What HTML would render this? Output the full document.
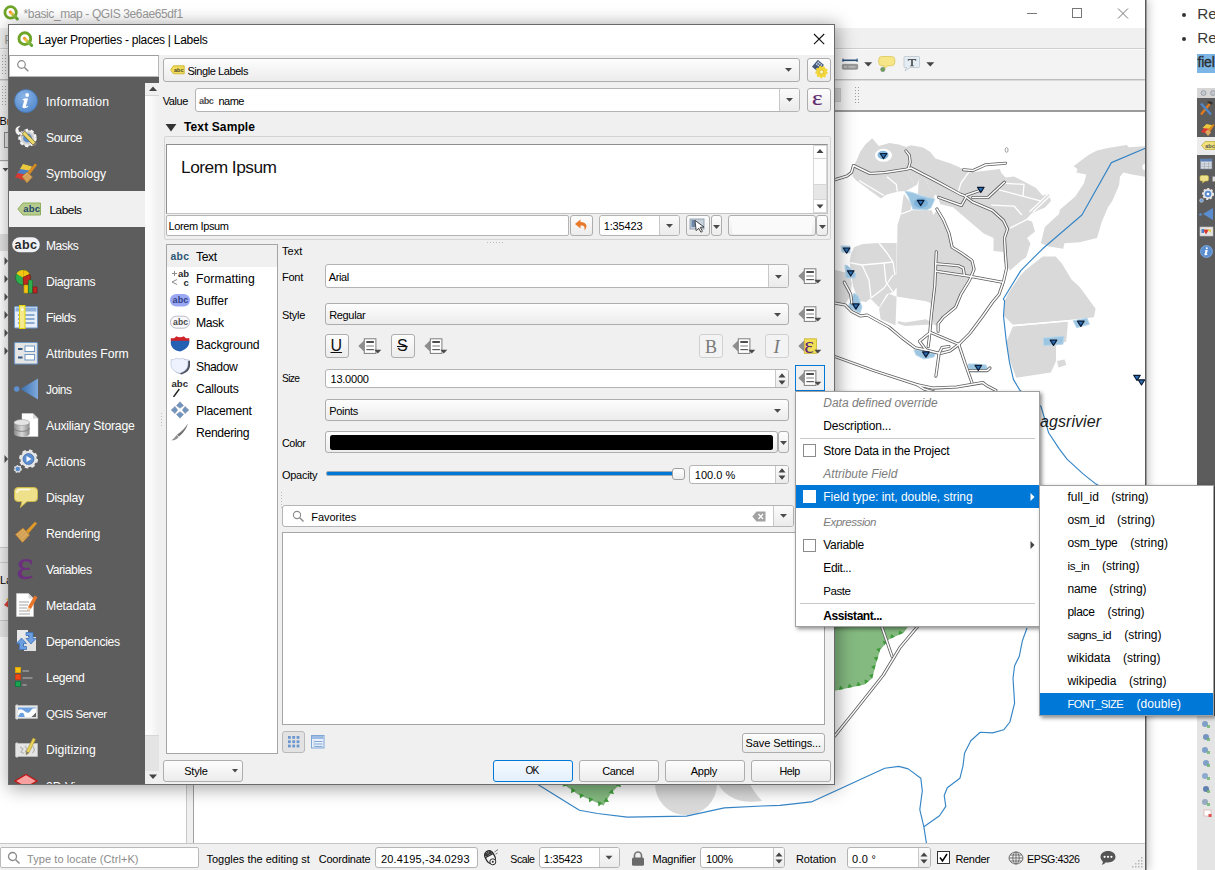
<!DOCTYPE html>
<html><head><meta charset="utf-8"><title>QGIS</title>
<style>
html,body{margin:0;padding:0}
body{width:1215px;height:870px;overflow:hidden;background:#fff;position:relative;font-family:"Liberation Sans",sans-serif;font-size:11px}
div,span.t,svg{position:absolute;box-sizing:border-box}
span.t{white-space:pre}
.btn{border:1px solid #adadad;border-radius:3px;background:linear-gradient(#fdfdfd,#ececec)}
.inp{border:1px solid #b4b4b4;border-radius:3px;background:#fff}
</style></head><body>
<div style="left:1146px;top:0px;width:69px;height:870px;background:#fff"></div>
<div style="left:1181.6px;top:12.7px;width:4.6px;height:4.6px;background:#333;border-radius:50%"></div>
<div style="left:1181.6px;top:36.5px;width:4.6px;height:4.6px;background:#333;border-radius:50%"></div>
<span class="t" style="left:1197.3px;top:3.8px;font-size:15.3px;line-height:20px;color:#3a3a3a;">Re</span>
<span class="t" style="left:1197.3px;top:27.6px;font-size:15.3px;line-height:20px;color:#3a3a3a;">Re</span>
<div style="left:1197px;top:54px;width:18px;height:19px;background:#7bb6e6"></div>
<span class="t" style="left:1197.5px;top:52.3px;font-size:14px;line-height:20px;color:#2b2b2b;letter-spacing:-0.2px;-webkit-text-stroke:.3px #2b2b2b;">fiel</span>
<div style="left:1197px;top:88px;width:18px;height:10px;background:#d6d6d6"></div>
<div style="left:1197px;top:98px;width:18px;height:618px;background:#5c5c5c"></div>
<div style="left:1197px;top:716px;width:18px;height:154px;background:#e4e4e4"></div>
<div style="left:1197px;top:137px;width:18px;height:18px;background:#ececec"></div>
<svg style="left:1197px;top:88px" width="18" height="180" viewBox="0 0 18 180">
<circle cx="6.5" cy="5" r="2.500000000000001" fill="#c2c6cc" stroke="#8e949c" stroke-width=".7"/><circle cx="16" cy="5" r="2.500000000000001" fill="#c2c6cc" stroke="#8e949c" stroke-width=".7"/>
<path d="M4 26.500000000000004l9-11" stroke="#e07a1f" stroke-width="2.400000000000001"/><path d="M4 15.500000000000002l10 11" stroke="#4f87c8" stroke-width="2.400000000000001"/><path d="M10 14c2-1.500000000000001 4-1 6 1l-2 2c-1-1-2-1.500000000000001-4-3z" fill="#333"/>
<path d="M4 44l5-7 7 1.500000000000001-4 8z" fill="#d83a32"/><path d="M5.5 40l4-4 7 1.500000000000001-2 3.500000000000001z" fill="#ecc93c"/><path d="M10 43l6-7 1.500000000000001 1-5.500000000000001 8z" fill="#d68a20"/><path d="M8 44l3-2.500000000000001 3 3-3 3.500000000000001z" fill="#d9a861"/>
<path d="M8 53.5h10v8H8l-3.500000000000001-4z" fill="#efe07a" stroke="#b9a53a" stroke-width=".7"/><text x="8.3" y="60" font-family="Liberation Sans" font-weight="bold" font-size="5.5" fill="#555">abc</text>
<rect x="3.500000000000001" y="71" width="11.500000000000002" height="10" fill="#d6dbe2" stroke="#7a8596" stroke-width=".6"/><rect x="3.500000000000001" y="71" width="11.500000000000002" height="2.500000000000001" fill="#5a7fb6"/><path d="M3.500000000000001 76h11.500000000000002M3.500000000000001 78.5h11.500000000000002M7.500000000000001 73.5v7.500000000000001M11.500000000000002 73.5v7.500000000000001" stroke="#9aa3b0" stroke-width=".5"/>
<path d="M4.500000000000001 87.5h5.5a1.500000000000001 1.500000000000001 0 0 1 1.500000000000001 1.500000000000001v2.500000000000001a1.500000000000001 1.500000000000001 0 0 1-1.500000000000001 1.500000000000001H8l-2.500000000000001 2 .5-2H4.500000000000001a1.500000000000001 1.500000000000001 0 0 1-1.500000000000001-1.500000000000001V89a1.500000000000001 1.500000000000001 0 0 1 1.500000000000001-1.500000000000001z" fill="#efe08c" stroke="#cdb84a" stroke-width=".6"/><rect x="15.500000000000002" y="88.5" width="3" height="5" fill="#ddd" stroke="#888" stroke-width=".6"/>
<circle cx="11" cy="106" r="5" fill="#e6e6e6" stroke="#e6e6e6" stroke-width="2" stroke-dasharray="2 1.700000000000001"/><circle cx="11" cy="106" r="3.300000000000001" fill="#5b8ed0"/><circle cx="11" cy="106" r="1.300000000000001" fill="#fff"/><circle cx="4.500000000000001" cy="112.5" r="1.800000000000001" fill="#6b9ad6" stroke="#cfd6e0" stroke-width=".7"/>
<path d="M16 120v12l-10-6z" fill="#5b8ed0"/><circle cx="3.500000000000001" cy="126.50000000000001" r="1.300000000000001" fill="#5b8ed0"/>
<rect x="3" y="139" width="13" height="9" fill="#e4e4e4" stroke="#bdbdbd" stroke-width=".6"/><path d="M6 141.5l3 5 3-5z" fill="#d83a32"/><path d="M10 141.5h4v3.500000000000001z" fill="#ecc93c"/><rect x="4.500000000000001" y="141" width="2.500000000000001" height="4" fill="#4c7fc4"/>
<circle cx="9.5" cy="163.50000000000003" r="6" fill="#5b8ed0" stroke="#86aee4" stroke-width=".8"/><path d="M9.8 159.3a1 1 0 1 1 0 2 1 1 0 0 1 0-2zM8 162.50000000000003c1-.5 2-.6 2.800000000000001-.3l-1 3.500000000000001c-.1.400000000000001.1.5.6.3l.2.5c-1 .7-2 1-2.700000000000001.700000000000001-.4-.2-.5-.6-.4-1.100000000000001l.8-2.700000000000001c.1-.4-.1-.5-.5-.4z" fill="#fff"/>
</svg>
<svg style="left:1197px;top:716px" width="18" height="110" viewBox="0 0 18 110"><circle cx="8" cy="8" r="3" fill="#6f93c4" opacity=".85"/><rect x="10" y="9" width="3" height="3" fill="#6cb36a" opacity=".8"/><circle cx="9" cy="21" r="3" fill="#5f86ba" opacity=".85"/><rect x="10" y="22" width="3" height="3" fill="#6cb36a" opacity=".8"/><circle cx="8" cy="34" r="3" fill="#6f93c4" opacity=".85"/><rect x="10" y="35" width="3" height="3" fill="#6cb36a" opacity=".8"/><circle cx="9" cy="47" r="3" fill="#6f93c4" opacity=".85"/><rect x="10" y="48" width="3" height="3" fill="#6cb36a" opacity=".8"/><circle cx="8" cy="60" r="3" fill="#7fa0cc" opacity=".85"/><rect x="10" y="61" width="3" height="3" fill="#6cb36a" opacity=".8"/><circle cx="9" cy="73" r="3" fill="#4a6ea6" opacity=".85"/><rect x="10" y="74" width="3" height="3" fill="#6cb36a" opacity=".8"/><circle cx="8" cy="86" r="3" fill="#8aa0b8" opacity=".85"/><rect x="10" y="87" width="3" height="3" fill="#6cb36a" opacity=".8"/><rect x="7" y="94" width="7" height="6" fill="#fff" stroke="#d8a0a0" stroke-width=".6"/><rect x="11.500000000000002" y="98" width="3" height="3" fill="#e05252"/></svg>
<div style="left:0px;top:0px;width:1146px;height:870px;background:#f0f0f0;box-shadow:0 0 10px 1px rgba(0,0,0,.3)"></div>
<div style="left:0px;top:0px;width:1146px;height:28px;background:#fff"></div>
<div style="left:1145px;top:0px;width:1px;height:870px;background:#6e6e6e"></div>
<span class="t" style="left:23.6px;top:5.5px;font-size:12px;line-height:16px;color:#9a9a9a;letter-spacing:-0.389px;">*basic_map - QGIS 3e6ae65df1</span>
<svg style="left:1020px;top:0" width="120" height="28"><g stroke="#777" stroke-width="1" fill="none"><path d="M7 13.5h10"/><rect x="52.5" y="8.5" width="9" height="9"/><path d="M98 8.5l10 10M108 8.5l-10 10"/></g></svg>
<div style="left:0px;top:28px;width:1146px;height:21px;background:#f0f0f0"></div>
<div style="left:0px;top:49px;width:1146px;height:1px;background:#fafafa"></div>
<div style="left:0px;top:50px;width:1146px;height:30px;background:#f3f3f3"></div>
<div style="left:0px;top:80px;width:1146px;height:1px;background:#dcdcdc"></div>
<div style="left:0px;top:81px;width:1146px;height:30px;background:#f3f3f3"></div>
<div style="left:0px;top:48px;width:1146px;height:1px;background:#cfcfcf"></div>
<div style="left:0px;top:79px;width:1146px;height:1px;background:#bdbdbd"></div>
<svg style="left:838px;top:50px" width="110" height="60" viewBox="0 0 110 60">
<rect x="4.5" y="9.5" width="15" height="1.6" fill="#2d5078"/><rect x="4.5" y="8.5" width="1" height="3.5" fill="#2d5078"/><rect x="18.6" y="8.5" width="1" height="3.5" fill="#2d5078"/>
<rect x="4.3" y="14.3" width="15.4" height="5" rx="1" fill="#9a9a9a" stroke="#7d7d7d" stroke-width=".6"/><rect x="6" y="16.3" width="3" height="1.2" fill="#c8c8c8"/><rect x="10.5" y="16.3" width="7" height="1.2" fill="#c8c8c8"/>
<path d="M26.2 12.2h8l-4 4.3z" fill="#444"/>
<path d="M44 6.5h9.5a3.3 3.3 0 0 1 3.3 3.3v2.6a3.3 3.3 0 0 1-3.3 3.3H50l-4.5 4 .7-4H44a3.3 3.3 0 0 1-3.3-3.3V9.800000000000001A3.3 3.3 0 0 1 44 6.5z" fill="#f6e688" stroke="#d9c24a" stroke-width=".7"/>
<circle cx="44.8" cy="19.5" r="2.2" fill="#6aa356" stroke="#8a8a8a" stroke-width=".6"/>
<path d="M67 6.5h13.500000000000004a1 1 0 0 1 1 1v9a1 1 0 0 1-1 1H72l-5 3.500000000000004 1.5-3.5H67a1 1 0 0 1-1-1v-9a1 1 0 0 1 1-1z" fill="#e4edf3" stroke="#b5bec6" stroke-width=".7"/>
<path d="M69.8 9h8.4v1.800000000000001h-.7c-.2-.7-.6-.9-1.500000000000001-.9h-1.100000000000001v5.600000000000001h1v.7h-3.8v-.7h1V9.9h-1.100000000000001c-.9 0-1.300000000000001.2-1.500000000000001.9h-.7z" fill="#555"/>
<path d="M88.3 12.2h8l-4 4.3z" fill="#444"/>
<g fill="#9c9c9c"><rect x="17" y="37" width="1" height="1"/><rect x="20" y="37" width="1" height="1"/><rect x="17" y="40" width="1" height="1"/><rect x="20" y="40" width="1" height="1"/><rect x="17" y="43" width="1" height="1"/><rect x="20" y="43" width="1" height="1"/><rect x="17" y="46" width="1" height="1"/><rect x="20" y="46" width="1" height="1"/><rect x="17" y="49" width="1" height="1"/><rect x="20" y="49" width="1" height="1"/><rect x="17" y="52" width="1" height="1"/><rect x="20" y="52" width="1" height="1"/></g>
</svg>
<div style="left:834px;top:88px;width:7px;height:14px;background:#d4d4d4;border:1px solid #cacaca"></div>
<div style="left:186px;top:110px;width:960px;height:734px;background:#f0f0f0"></div>
<div style="left:193px;top:110px;width:953px;height:734px;background:#fff;border-top:2px solid #9b9b9b;border-left:1px solid #a0a0a0;border-bottom:1px solid #c4c4c4"></div>
<div style="left:0px;top:162px;width:187px;height:682px;background:#fff;border-right:1px solid #c9c9c9;border-bottom:1px solid #c4c4c4"></div>
<span class="t" style="left:4.5px;top:32px;font-size:12px;line-height:16px;color:#9a9a9a;">P</span>
<svg style="left:2px;top:55px" width="5" height="20"><g fill="#a8a8a8"><rect x="0" y="0" width="1" height="1"/><rect x="3" y="0" width="1" height="1"/><rect x="0" y="3" width="1" height="1"/><rect x="3" y="3" width="1" height="1"/><rect x="0" y="6" width="1" height="1"/><rect x="3" y="6" width="1" height="1"/><rect x="0" y="9" width="1" height="1"/><rect x="3" y="9" width="1" height="1"/><rect x="0" y="12" width="1" height="1"/><rect x="3" y="12" width="1" height="1"/><rect x="0" y="15" width="1" height="1"/><rect x="3" y="15" width="1" height="1"/><rect x="0" y="18" width="1" height="1"/><rect x="3" y="18" width="1" height="1"/></g></svg>
<svg style="left:2px;top:86px" width="5" height="20"><g fill="#a8a8a8"><rect x="0" y="0" width="1" height="1"/><rect x="3" y="0" width="1" height="1"/><rect x="0" y="3" width="1" height="1"/><rect x="3" y="3" width="1" height="1"/><rect x="0" y="6" width="1" height="1"/><rect x="3" y="6" width="1" height="1"/><rect x="0" y="9" width="1" height="1"/><rect x="3" y="9" width="1" height="1"/><rect x="0" y="12" width="1" height="1"/><rect x="3" y="12" width="1" height="1"/><rect x="0" y="15" width="1" height="1"/><rect x="3" y="15" width="1" height="1"/><rect x="0" y="18" width="1" height="1"/><rect x="3" y="18" width="1" height="1"/></g></svg>
<div style="left:0px;top:111px;width:187px;height:51px;background:#f0f0f0"></div>
<span class="t" style="left:-0.5px;top:112.5px;font-size:11px;line-height:16px;color:#000;">Br</span>
<div style="left:4px;top:132px;width:12px;height:16px;border:1px solid #8a8a8a;background:#e6e6e6"></div>
<div style="left:0px;top:160px;width:187px;height:1px;background:#a9a9a9"></div>
<svg style="left:0;top:160px" width="9" height="440"><g fill="#555"><path d="M2.5 8h6l-3 3.500000000000001z"/><path d="M4.5 97v8l3.500000000000001-4z"/><path d="M4.5 115v8l3.500000000000001-4z"/><path d="M4.5 133v8l3.500000000000001-4z"/><path d="M4.5 151v8l3.500000000000001-4z"/><path d="M4.5 169v8l3.500000000000001-4z"/><path d="M4.5 187v8l3.500000000000001-4z"/><path d="M4.5 295v8l3.500000000000001-4z"/><path d="M4 392.000000000001v8l-3.6-4z"/></g></svg>
<div style="left:0px;top:234px;width:187px;height:17px;background:#e3e3e3"></div>
<div style="left:0px;top:547px;width:187px;height:16px;background:#f0f0f0;border-top:1px solid #d0d0d0;border-bottom:1px solid #d0d0d0"></div>
<div style="left:0px;top:563px;width:187px;height:57px;background:#f0f0f0"></div>
<span class="t" style="left:0px;top:571.5px;font-size:11px;line-height:16px;color:#000;">La</span>
<svg style="left:3px;top:597px" width="6" height="12"><path d="M1 8l5-6v9z" fill="#d8443c"/><path d="M3 2l3-1v4z" fill="#e9c63b"/></svg>
<div style="left:0px;top:620px;width:187px;height:1px;background:#c9c9c9"></div>
<div style="left:0px;top:621px;width:187px;height:16px;background:#e8e8e8"></div>
<div style="left:0px;top:843px;width:1146px;height:27px;background:#f0f0f0;border-top:1px solid #c6c6c6"></div>
<div style="left:0px;top:847px;width:199px;height:21px;background:#fff;border:1px solid #b9b9b9;border-radius:2px"></div>
<svg style="left:7px;top:851px" width="14" height="14"><circle cx="5.5" cy="5.5" r="4" fill="none" stroke="#8a8a8a" stroke-width="1.3"/><path d="M8.5 8.5l4 4" stroke="#8a8a8a" stroke-width="1.5"/></svg>
<span class="t" style="left:27px;top:850.6px;font-size:11px;line-height:16px;color:#8c8c8c;letter-spacing:0.080px;">Type to locate (Ctrl+K)</span>
<span class="t" style="left:206.4px;top:850.5px;font-size:11px;line-height:16px;color:#000;letter-spacing:0.002px;">Toggles the editing st</span>
<span class="t" style="left:318.7px;top:850.5px;font-size:11px;line-height:16px;color:#000;letter-spacing:-0.203px;">Coordinate</span>
<div style="left:375px;top:847px;width:103px;height:21px;"></div>
<div class="inp" style="left:375px;top:847px;width:103px;height:21px"></div>
<span class="t" style="left:381px;top:850.5px;font-size:11px;line-height:16px;color:#000;letter-spacing:0.150px;">20.4195,-34.0293</span>
<span class="t" style="left:510.3px;top:850.5px;font-size:10.59px;line-height:16px;color:#000;letter-spacing:-0.450px;">Scale</span>
<div class="inp" style="left:539px;top:847px;width:81px;height:21px"></div>
<div style="left:599px;top:848px;width:20px;height:19px;border-left:1px solid #c8c8c8;background:linear-gradient(#fbfbfb,#ebebeb);border-radius:0 2px 2px 0"></div>
<svg style="left:604px;top:855px" width="10" height="6"><path d="M1.500000000000001 .8h7l-3.500000000000001 3.800000000000001z" fill="#4a4a4a"/></svg>
<span class="t" style="left:543.8px;top:850.5px;font-size:11px;line-height:16px;color:#000;letter-spacing:-0.211px;">1:35423</span>
<span class="t" style="left:652.5px;top:850.5px;font-size:11px;line-height:16px;color:#000;letter-spacing:-0.219px;">Magnifier</span>
<div class="inp" style="left:700px;top:847px;width:85px;height:21px"></div>
<div style="left:773px;top:848px;width:11px;height:19px;border-left:1px solid #c8c8c8;background:linear-gradient(#fbfbfb,#ebebeb);border-radius:0 2px 2px 0"></div>
<svg style="left:774px;top:850px" width="10" height="16"><path d="M1.5 6.5l3.500000000000001-4 3.500000000000001 4zM1.5 9.5l3.500000000000001 4 3.500000000000001-4z" fill="#444"/></svg>
<span class="t" style="left:706px;top:850.5px;font-size:11px;line-height:16px;color:#000;letter-spacing:-0.380px;">100%</span>
<span class="t" style="left:796px;top:850.5px;font-size:11px;line-height:16px;color:#000;letter-spacing:-0.112px;">Rotation</span>
<div class="inp" style="left:847px;top:847px;width:84px;height:21px"></div>
<div style="left:918px;top:848px;width:12px;height:19px;border-left:1px solid #c8c8c8;background:linear-gradient(#fbfbfb,#ebebeb);border-radius:0 2px 2px 0"></div>
<svg style="left:919px;top:850px" width="10" height="16"><path d="M1.5 6.5l3.500000000000001-4 3.500000000000001 4zM1.5 9.5l3.500000000000001 4 3.500000000000001-4z" fill="#444"/></svg>
<span class="t" style="left:852px;top:850.5px;font-size:11px;line-height:16px;color:#000;letter-spacing:0.263px;">0.0 °</span>
<div style="left:937px;top:851px;width:13px;height:13px;background:#fff;border:1px solid #333"></div>
<svg style="left:937px;top:851px" width="13" height="13"><path d="M3 6.5l2.500000000000001 3.500000000000001 4.5-7" fill="none" stroke="#000" stroke-width="1.5"/></svg>
<span class="t" style="left:955.4px;top:850.5px;font-size:11px;line-height:16px;color:#000;letter-spacing:-0.296px;">Render</span>
<span class="t" style="left:1027px;top:850.5px;font-size:10.72px;line-height:16px;color:#000;letter-spacing:-0.450px;">EPSG:4326</span>
<svg style="left:482px;top:848px" width="18" height="20"><g transform="rotate(-28 8 9)"><rect x="3.500000000000001" y="2.500000000000001" width="9" height="13" rx="4.500000000000001" fill="#f4f4f4" stroke="#2a2a2a" stroke-width="1.200000000000001"/><path d="M3.500000000000001 7.500000000000001h9M8 2.500000000000001v5" stroke="#2a2a2a" stroke-width="1"/><rect x="4.2" y="3.2" width="3.300000000000001" height="4" rx="1.500000000000001" fill="#3a3a3a"/><rect x="8.5" y="3.2" width="3.300000000000001" height="4" rx="1.500000000000001" fill="#3a3a3a"/></g><circle cx="10.8" cy="13.8" r="3" fill="#f4f4f4" stroke="#2a2a2a" stroke-width="1"/><circle cx="10.8" cy="13.8" r="1" fill="#2a2a2a"/><path d="M12.5 4l3.500000000000001-2.500000000000001M13.500000000000002 6l2-.8" stroke="#555" stroke-width=".8"/></svg>
<svg style="left:630px;top:850px" width="16" height="18"><path d="M4.500000000000001 8V5.5a3.500000000000001 3.500000000000001 0 0 1 7 0V8" fill="none" stroke="#777" stroke-width="1.700000000000001"/><rect x="2" y="7.500000000000001" width="12" height="8.3" rx="1.500000000000001" fill="#6a6a6a"/></svg>
<svg style="left:1008px;top:850px" width="16" height="16"><g fill="none" stroke="#666" stroke-width=".9"><ellipse cx="8" cy="8" rx="7" ry="6"/><ellipse cx="8" cy="8" rx="3.2" ry="6"/><path d="M1 8h14M2 5h12M2 11h12M8 2v12"/></g></svg>
<svg style="left:1099px;top:849px" width="18" height="18"><path d="M9 2c4.400000000000001 0 7.5 2.600000000000001 7.5 5.800000000000001S13.4 13.5 9 13.5c-.8 0-1.500000000000001-.1-2.2-.2C5.800000000000001 14.5 4.2 15.700000000000001 2.600000000000001 16c.8-1 1.300000000000001-2.400000000000001 1.200000000000001-3.600000000000001C2.400000000000001 11.200000000000001 1.500000000000001 9.600000000000001 1.500000000000001 7.800000000000001 1.500000000000001 4.600000000000001 4.600000000000001 2 9 2z" fill="#555"/><circle cx="5.6" cy="7.800000000000001" r="1.100000000000001" fill="#fff"/><circle cx="9" cy="7.800000000000001" r="1.100000000000001" fill="#fff"/><circle cx="12.4" cy="7.800000000000001" r="1.100000000000001" fill="#fff"/></svg>
<svg style="left:1131px;top:856px" width="13" height="13"><g fill="#b5b5b5"><rect x="10" y="1" width="1.5" height="1.5"/><rect x="7" y="4" width="1.5" height="1.5"/><rect x="10" y="4" width="1.5" height="1.5"/><rect x="4" y="7" width="1.5" height="1.5"/><rect x="7" y="7" width="1.5" height="1.5"/><rect x="10" y="7" width="1.5" height="1.5"/><rect x="1" y="10" width="1.5" height="1.5"/><rect x="4" y="10" width="1.5" height="1.5"/><rect x="7" y="10" width="1.5" height="1.5"/><rect x="10" y="10" width="1.5" height="1.5"/></g></svg>
<svg style="left:3px;top:5px" width="16" height="16" viewBox="0 0 16 16"><defs><linearGradient id="lg1" x1="6" y1="6" x2="15" y2="15" gradientUnits="userSpaceOnUse"><stop offset="0" stop-color="#f47b20"/><stop offset=".3" stop-color="#f6c544"/><stop offset=".55" stop-color="#8cbf3f"/><stop offset="1" stop-color="#5a9e2c"/></linearGradient></defs><circle cx="7.6" cy="7.4" r="5.7" fill="none" stroke="#6ea529" stroke-width="2.8"/><path d="M7.3 7.1L14.2 13.900000000000002" stroke="url(#lg1)" stroke-width="3" stroke-linecap="round"/></svg>
<div style="left:1145px;top:0px;width:2px;height:870px;background:linear-gradient(90deg,#5a5a5a 50%,#9b9b9b 50%)"></div>
<svg style="left:0;top:0" width="1215" height="870" viewBox="0 0 1215 870"><defs><clipPath id="cv"><rect x="194" y="112" width="951" height="731"/></clipPath>
<radialGradient id="pg"><stop offset="0" stop-color="#5f9fcf"/><stop offset="1" stop-color="#a9cde6"/></radialGradient></defs><g clip-path="url(#cv)">
<polygon points="872.2,138.3 878.8,145.9 889.5,143.1 899,144.5 905.9,146.9 911,145.2 923.1,147.4 930,151.7 935.5,158.6 950.7,163.4 961,168.1 968.8,172.1 966.2,175.9 961,182.8 958.4,191.4 961,194.5 936.9,181 911,168.1 905.9,169 869.7,173.3 854.1,165.5 856.7,160.3 860.2,151.7 865.3,144.5" fill="#d9d9d9"/>
<polygon points="854.1,166.4 869.7,174.1 905.9,169.8 911,169 907.6,174.1 912.8,181 914.5,186.2 905.9,191 898.1,191.4 886.9,194.5 880.9,198.6 855.9,180.2 852.4,175.9" fill="#d9d9d9"/>
<polygon points="911,169 936.9,181.9 961,194.8 963.6,199.1 961.4,205.5 950.7,201.7 938.6,197.4 935.2,194.5 929.1,187.9 926.6,180.2 918.8,179.7 917.1,184.5 914.5,186.2 912.8,181 907.6,174.1" fill="#d9d9d9"/>
<polygon points="918.8,179.7 926.6,180.2 929.1,187.9 935.2,194 933.4,199.1 923.1,195.7 917.9,194" fill="#d9d9d9"/>
<polygon points="904,194 911,203.4 910.7,210.3 901,213.8 903.3,196.6" fill="#d9d9d9"/>
<polygon points="966,173 1000,169 1001,172.5 1005.5,177.5 1014,176.5 1025,182 1036,188 1042.5,195.5 1049,194 1051,201 1045,207.5 1032,213 1026,219.5 1032,221.5 1035,231.5 1027,238 1030.5,243.5 1026,257.5 1022,260 1010,270.5 1004,262 1003.3,252 993.5,251 993.5,238 983.7,233.5 968.4,220.4 953,207.3 940,204 938.6,197.4 950.7,201.7 961.4,205.5 963.6,199.1 961,194.8 958.4,191.4 961,182.8 966.2,175.9" fill="#d9d9d9"/>
<polygon points="901,213.8 911,210.3 931.7,210.3 933.4,215 937.8,208.6 943.5,220 949,233.1 952.2,247.3 961,252.7 971.9,260.4 974.1,269.1 969.7,280 961,294.2 955.5,307.3 943.5,317.1 935.9,325.9 932.6,322.6 930.4,303 926,301.2 896.6,296.4 897.2,241.8 897.5,225" fill="#d9d9d9"/>
<polygon points="889,293.8 896.6,296.8 895.5,325.2 880.6,319.3 879.1,308.4" fill="#d9d9d9"/>
<polygon points="897.7,320.9 905.3,322.6 926,319.3 934.8,324.8 926,324.8 905.3,325.9 898.1,323.7" fill="#d9d9d9"/>
<polygon points="854,247.3 862.7,244 879.1,242.9 896.6,242.9 896.6,274.6 899.9,283.3 893.3,292 886.8,294.2 879.1,307.3 870.4,298.6 866,301.9 858.4,300.8 852.9,285.5 849.6,262.6 850.7,254.9" fill="#d9d9d9"/>
<polygon points="834.4,269.8 849.6,273.5 851.8,283.3 850.7,295.3 845.3,304 834.4,303" fill="#d9d9d9"/>
<polygon points="1073.6,166.3 1079.7,161.5 1088.4,155 1097,150.6 1108,148 1126.6,145.1 1128.8,147.3 1146,146.2 1146,176.8 1132,174.6 1123.4,172.4 1120,176.8 1119,185.5 1112.4,200.8 1108,207.3 1101.5,222.6 1097,237.9 1079.7,242.2 1064.4,243.3 1063.3,248.8 1049,246.6 1040.9,243.3 1044.8,227 1059,213.9 1060,209.5 1075.3,196.4 1084,183.3 1086.3,174.6 1076.4,172.4 1077.5,169" fill="#d9d9d9"/>
<polygon points="1025.1,270.6 1042.6,256.4 1055.7,256.4 1062.2,264.1 1071.5,279.4 1079.7,287 1095.6,308.7 1093.9,317.3 1068,320.1 1040,322.6 1012.9,324.8 1004,316 1004.6,300.8 1009,292 1020,276" fill="#d9d9d9"/>
<polygon points="1012.8,326.5 1040,324 1068,321.5 1066.3,341.5 1056,345.6 1056,361.2 1050.8,372.5 1016.3,377.7 1010,361 1006.5,342" fill="#d9d9d9"/>
<polygon points="1057,361 1064.6,359.4 1066.3,365 1058.5,367.4" fill="#d9d9d9"/>
<circle cx="1145.500000000001" cy="167" r="3.2" fill="#fff"/>
<polyline points="968.8,172.1 961,183 958.4,191.4" fill="none" stroke="#fff" stroke-width="1.3" stroke-linejoin="round"/>
<polyline points="886.9,176.7 896.4,184.5 897.2,191.4" fill="none" stroke="#fff" stroke-width="1.3" stroke-linejoin="round"/>
<polyline points="859,180.5 884,195.5" fill="none" stroke="#fff" stroke-width="1.3" stroke-linejoin="round"/>
<polyline points="999,189.9 1040.4,200.8" fill="none" stroke="#fff" stroke-width="1.3" stroke-linejoin="round"/>
<polyline points="1005.5,183.3 1024,184.4 1023,196.4" fill="none" stroke="#fff" stroke-width="1.3" stroke-linejoin="round"/>
<polyline points="991.3,205.1 1014.2,206.2 1021.9,215" fill="none" stroke="#fff" stroke-width="1.3" stroke-linejoin="round"/>
<polyline points="1029.5,211.7 1049.1,193.1" fill="none" stroke="#fff" stroke-width="1.3" stroke-linejoin="round"/>
<polyline points="1033,212 1051,195" fill="none" stroke="#fff" stroke-width="1.3" stroke-linejoin="round"/>
<polyline points="1009.9,228.1 1027.3,219.3" fill="none" stroke="#fff" stroke-width="1.3" stroke-linejoin="round"/>
<polyline points="879,243 887,253 893,262 895,275" fill="none" stroke="#fff" stroke-width="1.3" stroke-linejoin="round"/>
<polyline points="849.6,262.6 862,265 884,263 893,262" fill="none" stroke="#fff" stroke-width="1.3" stroke-linejoin="round"/>
<polyline points="862,265 869,280 871,298" fill="none" stroke="#fff" stroke-width="1.3" stroke-linejoin="round"/>
<polyline points="871,298 884,288 893,275" fill="none" stroke="#fff" stroke-width="1.3" stroke-linejoin="round"/>
<polyline points="893,292 886,282 884,263" fill="none" stroke="#fff" stroke-width="1.3" stroke-linejoin="round"/>
<polyline points="1012.9,325.5 1040,323.3 1068,320.8" fill="none" stroke="#fff" stroke-width="1.3" stroke-linejoin="round"/>
<polyline points="901,214 911,210.3" fill="none" stroke="#fff" stroke-width="1.3" stroke-linejoin="round"/>
<ellipse cx="883.5" cy="155.3" rx="8.5" ry="6.5" fill="#fff"/><ellipse cx="883" cy="155" rx="5.5" ry="4.2" fill="#86b7dc"/>
<polygon points="905,191.4 911,192.2 921.4,195.7 934.8,199.1 930.9,207.8 926.6,210 912.8,209 911,203.4 908.4,196.6" fill="#9cc5e2" stroke="#b9d7eb" stroke-width="1" stroke-linejoin="round"/>
<polygon points="1073.2,320.8 1087,318 1089.4,324.2 1076.7,327.7" fill="#9cc5e2" stroke="#b9d7eb" stroke-width="1" stroke-linejoin="round"/>
<polygon points="1043.2,338 1063.9,336.3 1062.9,344.2 1043.9,345.6" fill="#9cc5e2" stroke="#b9d7eb" stroke-width="1" stroke-linejoin="round"/>
<polygon points="841,246 850,246 850,253 842,252" fill="#9cc5e2" stroke="#b9d7eb" stroke-width="1" stroke-linejoin="round"/>
<polygon points="845,265 848,266 856,274 855,278 846,278" fill="#9cc5e2" stroke="#b9d7eb" stroke-width="1" stroke-linejoin="round"/>
<polygon points="854,293 858,296 862,307 860,313 848,307 850,303" fill="#9cc5e2" stroke="#b9d7eb" stroke-width="1" stroke-linejoin="round"/>
<polygon points="914,350 924,350 936,352 934,357 924,359 916,355" fill="#9cc5e2" stroke="#b9d7eb" stroke-width="1" stroke-linejoin="round"/>
<polygon points="968,364 976,364 986,365 988,370 976,372 969,369" fill="#9cc5e2" stroke="#b9d7eb" stroke-width="1" stroke-linejoin="round"/>
<ellipse cx="921" cy="203" rx="7" ry="5" fill="#6fa9d6" opacity=".7"/>
<polygon points="834.7,626.6 908.2,626.6 903.6,632.8 889.5,639.1 880.1,650 875.4,665.7 872.3,678.2 864.5,684.5 834.7,690.7" fill="#84ba80"/><polygon points="561,780 566,786 578,794.5 603.5,805.5 611,793 620,784 622,780" fill="#84ba80"/><polygon points="903.1,633.0 898.6,635.0 899.2,630.4" fill="#3f9b3a"/><polygon points="894.9,636.7 890.4,638.7 891.0,634.0" fill="#3f9b3a"/><polygon points="887.5,641.4 884.2,645.2 882.8,640.7" fill="#3f9b3a"/><polygon points="880.8,647.8 879.3,652.6 876.2,649.0" fill="#3f9b3a"/><polygon points="878.2,656.4 876.8,661.2 873.6,657.6" fill="#3f9b3a"/><polygon points="875.6,665.0 874.4,669.8 871.1,666.5" fill="#3f9b3a"/><polygon points="873.4,673.7 872.2,678.6 868.9,675.2" fill="#3f9b3a"/><polygon points="868.9,681.0 865.0,684.1 864.4,679.4" fill="#3f9b3a"/><polygon points="861.2,685.2 856.3,686.2 857.9,681.8" fill="#3f9b3a"/><polygon points="852.4,687.0 847.5,688.0 849.1,683.6" fill="#3f9b3a"/><polygon points="843.6,688.9 838.7,689.9 840.3,685.4" fill="#3f9b3a"/><polygon points="564.6,781.5 567.8,785.4 562.5,786.5" fill="#3f9b3a"/><polygon points="571.7,787.8 575.8,790.7 570.9,793.2" fill="#3f9b3a"/><polygon points="579.6,793.2 584.2,795.2 580.0,798.6" fill="#3f9b3a"/><polygon points="588.8,797.2 593.4,799.2 589.2,802.6" fill="#3f9b3a"/><polygon points="598.0,801.2 602.6,803.1 598.4,806.6" fill="#3f9b3a"/><polygon points="603.6,801.8 606.2,797.5 609.0,802.1" fill="#3f9b3a"/><polygon points="608.8,792.7 612.3,789.2 613.9,794.3" fill="#3f9b3a"/><polygon points="615.8,785.6 619.4,782.1 621.0,787.2" fill="#3f9b3a"/>
<polyline points="834,180 847,176 851.5,172.5 853.5,165.5 870,173.5 885,172.5 906,169.3 911,168 937,181.5 961,194.5 964,195.5 972.5,202 992.5,210.5 1003.5,220.5 1007.5,229 1004.5,238 1005.5,255 1006.5,268.5 1003.5,281.5 999,294.5 992.6,302 982.8,316 969.7,333.5 958.8,344.4 950,351 941.3,353.2" fill="none" stroke="#5e5e5e" stroke-width="3.1" stroke-linejoin="round" stroke-linecap="round"/>
<polyline points="905.9,150.9 909.3,155.2 910.2,162.1 908.4,168.1" fill="none" stroke="#5e5e5e" stroke-width="3.1" stroke-linejoin="round" stroke-linecap="round"/>
<polyline points="963.6,169.8 972.7,170.6 985.8,164.7 1005.5,163.2" fill="none" stroke="#5e5e5e" stroke-width="3.1" stroke-linejoin="round" stroke-linecap="round"/>
<polyline points="966.2,195.3 981.5,189.9" fill="none" stroke="#5e5e5e" stroke-width="3.1" stroke-linejoin="round" stroke-linecap="round"/>
<polyline points="972.7,197.5 988,197.5 1004.4,182.2" fill="none" stroke="#5e5e5e" stroke-width="3.1" stroke-linejoin="round" stroke-linecap="round"/>
<polyline points="938.6,197.4 961.4,205.5 965.8,197.5" fill="none" stroke="#5e5e5e" stroke-width="3.1" stroke-linejoin="round" stroke-linecap="round"/>
<polyline points="936.9,209 943.5,220 949,233.1 952.2,247.3 961,252.7 971.9,260.4 974.1,269.1 969.7,280 961,294.2 955.5,307.3 943.5,317.1 938.1,323.7 938.1,331.3" fill="none" stroke="#5e5e5e" stroke-width="3.1" stroke-linejoin="round" stroke-linecap="round"/>
<polyline points="936.3,251.7 934.8,285.5 931.5,313.9 929.3,337.9 928.2,346.6" fill="none" stroke="#5e5e5e" stroke-width="3.1" stroke-linejoin="round" stroke-linecap="round"/>
<polyline points="936.3,263.7 958.8,265.8 963.2,268 964.3,274.6" fill="none" stroke="#5e5e5e" stroke-width="3.1" stroke-linejoin="round" stroke-linecap="round"/>
<polyline points="935.9,271.3 969.7,276.3 1002.5,282.2" fill="none" stroke="#5e5e5e" stroke-width="3.1" stroke-linejoin="round" stroke-linecap="round"/>
<polyline points="834.4,303 845.3,305.1 851.8,311.7 860.6,316 867.1,315 888.9,327 902,337.9 915.1,347.7 926,349.9 939.1,353.2" fill="none" stroke="#5e5e5e" stroke-width="3.1" stroke-linejoin="round" stroke-linecap="round"/>
<polyline points="844.2,282.2 850.7,294.2 851.8,303" fill="none" stroke="#5e5e5e" stroke-width="3.1" stroke-linejoin="round" stroke-linecap="round"/>
<polyline points="926,349.9 919.5,341.2 930.4,332.4 958.8,344.4" fill="none" stroke="#5e5e5e" stroke-width="3.1" stroke-linejoin="round" stroke-linecap="round"/>
<polyline points="939.1,353.2 937,368.4 935.9,376.1" fill="none" stroke="#5e5e5e" stroke-width="3.1" stroke-linejoin="round" stroke-linecap="round"/>
<polyline points="939.1,353.2 942,347.5 949,346.5" fill="none" stroke="#5e5e5e" stroke-width="3.1" stroke-linejoin="round" stroke-linecap="round"/>
<polyline points="958.8,344.4 965.3,364.1 971.9,382.6" fill="none" stroke="#5e5e5e" stroke-width="3.1" stroke-linejoin="round" stroke-linecap="round"/>
<polyline points="969.7,370.6 987.2,370.6 990,368" fill="none" stroke="#5e5e5e" stroke-width="3.1" stroke-linejoin="round" stroke-linecap="round"/>
<polyline points="834.4,356.4 873.7,370.6 917.3,384.8 932.6,388.1 956.6,387 982.8,382.6 987.2,385.9 995.9,390.3" fill="none" stroke="#5e5e5e" stroke-width="3.1" stroke-linejoin="round" stroke-linecap="round"/>
<polyline points="917.3,384.8 924,389 934,392" fill="none" stroke="#5e5e5e" stroke-width="3.1" stroke-linejoin="round" stroke-linecap="round"/>
<polyline points="917.6,626.6 900.4,646.9 883.2,675.1 853.5,712.6 834.7,736" fill="none" stroke="#5e5e5e" stroke-width="3.1" stroke-linejoin="round" stroke-linecap="round"/>
<polyline points="881.7,626.6 892,656.3" fill="none" stroke="#5e5e5e" stroke-width="3.1" stroke-linejoin="round" stroke-linecap="round"/>
<polyline points="834,180 847,176 851.5,172.5 853.5,165.5 870,173.5 885,172.5 906,169.3 911,168 937,181.5 961,194.5 964,195.5 972.5,202 992.5,210.5 1003.5,220.5 1007.5,229 1004.5,238 1005.5,255 1006.5,268.5 1003.5,281.5 999,294.5 992.6,302 982.8,316 969.7,333.5 958.8,344.4 950,351 941.3,353.2" fill="none" stroke="#fff" stroke-width="1.5" stroke-linejoin="round" stroke-linecap="round"/>
<polyline points="905.9,150.9 909.3,155.2 910.2,162.1 908.4,168.1" fill="none" stroke="#fff" stroke-width="1.5" stroke-linejoin="round" stroke-linecap="round"/>
<polyline points="963.6,169.8 972.7,170.6 985.8,164.7 1005.5,163.2" fill="none" stroke="#fff" stroke-width="1.5" stroke-linejoin="round" stroke-linecap="round"/>
<polyline points="966.2,195.3 981.5,189.9" fill="none" stroke="#fff" stroke-width="1.5" stroke-linejoin="round" stroke-linecap="round"/>
<polyline points="972.7,197.5 988,197.5 1004.4,182.2" fill="none" stroke="#fff" stroke-width="1.5" stroke-linejoin="round" stroke-linecap="round"/>
<polyline points="938.6,197.4 961.4,205.5 965.8,197.5" fill="none" stroke="#fff" stroke-width="1.5" stroke-linejoin="round" stroke-linecap="round"/>
<polyline points="936.9,209 943.5,220 949,233.1 952.2,247.3 961,252.7 971.9,260.4 974.1,269.1 969.7,280 961,294.2 955.5,307.3 943.5,317.1 938.1,323.7 938.1,331.3" fill="none" stroke="#fff" stroke-width="1.5" stroke-linejoin="round" stroke-linecap="round"/>
<polyline points="936.3,251.7 934.8,285.5 931.5,313.9 929.3,337.9 928.2,346.6" fill="none" stroke="#fff" stroke-width="1.5" stroke-linejoin="round" stroke-linecap="round"/>
<polyline points="936.3,263.7 958.8,265.8 963.2,268 964.3,274.6" fill="none" stroke="#fff" stroke-width="1.5" stroke-linejoin="round" stroke-linecap="round"/>
<polyline points="935.9,271.3 969.7,276.3 1002.5,282.2" fill="none" stroke="#fff" stroke-width="1.5" stroke-linejoin="round" stroke-linecap="round"/>
<polyline points="834.4,303 845.3,305.1 851.8,311.7 860.6,316 867.1,315 888.9,327 902,337.9 915.1,347.7 926,349.9 939.1,353.2" fill="none" stroke="#fff" stroke-width="1.5" stroke-linejoin="round" stroke-linecap="round"/>
<polyline points="844.2,282.2 850.7,294.2 851.8,303" fill="none" stroke="#fff" stroke-width="1.5" stroke-linejoin="round" stroke-linecap="round"/>
<polyline points="926,349.9 919.5,341.2 930.4,332.4 958.8,344.4" fill="none" stroke="#fff" stroke-width="1.5" stroke-linejoin="round" stroke-linecap="round"/>
<polyline points="939.1,353.2 937,368.4 935.9,376.1" fill="none" stroke="#fff" stroke-width="1.5" stroke-linejoin="round" stroke-linecap="round"/>
<polyline points="939.1,353.2 942,347.5 949,346.5" fill="none" stroke="#fff" stroke-width="1.5" stroke-linejoin="round" stroke-linecap="round"/>
<polyline points="958.8,344.4 965.3,364.1 971.9,382.6" fill="none" stroke="#fff" stroke-width="1.5" stroke-linejoin="round" stroke-linecap="round"/>
<polyline points="969.7,370.6 987.2,370.6 990,368" fill="none" stroke="#fff" stroke-width="1.5" stroke-linejoin="round" stroke-linecap="round"/>
<polyline points="834.4,356.4 873.7,370.6 917.3,384.8 932.6,388.1 956.6,387 982.8,382.6 987.2,385.9 995.9,390.3" fill="none" stroke="#fff" stroke-width="1.5" stroke-linejoin="round" stroke-linecap="round"/>
<polyline points="917.3,384.8 924,389 934,392" fill="none" stroke="#fff" stroke-width="1.5" stroke-linejoin="round" stroke-linecap="round"/>
<polyline points="917.6,626.6 900.4,646.9 883.2,675.1 853.5,712.6 834.7,736" fill="none" stroke="#fff" stroke-width="1.5" stroke-linejoin="round" stroke-linecap="round"/>
<polyline points="881.7,626.6 892,656.3" fill="none" stroke="#fff" stroke-width="1.5" stroke-linejoin="round" stroke-linecap="round"/>
<circle cx="686" cy="784" r="31" fill="#d9d9d9"/>
<path d="M716 780 Q728 806 762 801 Q752 790 748 780z" fill="#d9d9d9"/>
<polyline points="1146,148 1111.4,162.6 1081.9,215 1042.6,248.8 1031.7,259.7 1020.8,270.6 1003.3,299 1004.6,300.8 1003.5,316 1006.4,342.2 1009.4,361.9 1013.4,379.4 1019.9,390.3 1030,398.5 1041,406.4 1045,420 1048.6,432.8 1059.1,448.6 1067,459.1 1082.8,473.6 1096,484.1 1110,492" fill="none" stroke="#3585c6" stroke-width="1.15" stroke-linejoin="round"/>
<polyline points="1027,628 1022.4,640.7 1019.3,656.3 1014.6,665.7 1013,678.2 1014.6,703.2 1009.9,722 1003.7,729.8 992.7,732.9 980.2,732.3 970.8,740.8 964.5,753.3 963,765.8 959.9,778.3 947.3,787.7 944.2,795.5 945.8,806.4 939.5,815.8 923.9,826.8" fill="none" stroke="#3585c6" stroke-width="1.15" stroke-linejoin="round"/>
<polyline points="538.3,784.8 579.4,810.2 597.5,813.5 627.2,817.1 686.4,816.1 724.3,807.9 762.1,806 780,805.4 811.3,801.9 884.8,768.3 898.9,766.4 908.2,768.9 920.8,778.3 922.3,790.8 919.8,809.6 923.9,826.8 926.4,843" fill="none" stroke="#3585c6" stroke-width="1.15" stroke-linejoin="round"/>
<path d="M880.2 153.5h6.6l-3.3 5.2z" fill="#2a6fb5" stroke="#0c1b33" stroke-width="1.2" stroke-linejoin="round"/>
<path d="M977.5 187.3h6.6l-3.3 5.2z" fill="#2a6fb5" stroke="#0c1b33" stroke-width="1.2" stroke-linejoin="round"/>
<path d="M917.4 200.4h6.6l-3.3 5.2z" fill="#2a6fb5" stroke="#0c1b33" stroke-width="1.2" stroke-linejoin="round"/>
<path d="M843.3 248.0h6.6l-3.3 5.2z" fill="#2a6fb5" stroke="#0c1b33" stroke-width="1.2" stroke-linejoin="round"/>
<path d="M847.4 270.8h6.6l-3.3 5.2z" fill="#2a6fb5" stroke="#0c1b33" stroke-width="1.2" stroke-linejoin="round"/>
<path d="M852.6 303.9h6.6l-3.3 5.2z" fill="#2a6fb5" stroke="#0c1b33" stroke-width="1.2" stroke-linejoin="round"/>
<path d="M922.6 351.9h6.6l-3.3 5.2z" fill="#2a6fb5" stroke="#0c1b33" stroke-width="1.2" stroke-linejoin="round"/>
<path d="M975.0 365.3h6.6l-3.3 5.2z" fill="#2a6fb5" stroke="#0c1b33" stroke-width="1.2" stroke-linejoin="round"/>
<path d="M1077.5 321.2h6.6l-3.3 5.2z" fill="#2a6fb5" stroke="#0c1b33" stroke-width="1.2" stroke-linejoin="round"/>
<path d="M1050.2 340.2h6.6l-3.3 5.2z" fill="#2a6fb5" stroke="#0c1b33" stroke-width="1.2" stroke-linejoin="round"/>
<path d="M1133.7 375.3h6.6l-3.3 5.2z" fill="#2a6fb5" stroke="#0c1b33" stroke-width="1.2" stroke-linejoin="round"/>
<path d="M1138.2 379.8h6.6l-3.3 5.2z" fill="#2a6fb5" stroke="#0c1b33" stroke-width="1.2" stroke-linejoin="round"/>
<ellipse cx="1006.6" cy="150" rx="1.5" ry="2.3" fill="none" stroke="#666" stroke-width=".6"/>
</g></svg>
<span class="t" style="left:1040px;top:411.5px;font-size:16px;line-height:20px;color:#1a1a1a;letter-spacing:0.066px;font-style:italic;">agsrivier</span>
<div style="left:8px;top:24px;width:827px;height:761px;background:#f0f0f0;border:1px solid #6a6a6a;box-shadow:2px 2px 17px 1px rgba(0,0,0,.38)"></div>
<div style="left:9px;top:25px;width:825px;height:30px;background:#fff"></div>
<svg style="left:17px;top:31px" width="16.5" height="16.5" viewBox="0 0 16 16"><defs><linearGradient id="lg2" x1="6" y1="6" x2="15" y2="15" gradientUnits="userSpaceOnUse"><stop offset="0" stop-color="#f47b20"/><stop offset=".3" stop-color="#f6c544"/><stop offset=".55" stop-color="#8cbf3f"/><stop offset="1" stop-color="#5a9e2c"/></linearGradient></defs><circle cx="7.6" cy="7.4" r="5.7" fill="none" stroke="#6ea529" stroke-width="2.8"/><path d="M7.3 7.1L14.2 13.900000000000002" stroke="url(#lg2)" stroke-width="3" stroke-linecap="round"/></svg>
<span class="t" style="left:38.2px;top:32px;font-size:12px;line-height:16px;color:#000;letter-spacing:-0.271px;">Layer Properties - places | Labels</span>
<svg style="left:812px;top:32px" width="14" height="14"><path d="M2 2l10.2 10.2M12.2 2l-10.2 10.2" stroke="#111" stroke-width="1.1" fill="none"/></svg>
<div style="left:9px;top:55px;width:150px;height:22px;background:#fff;border:1px solid #b9b9b9;border-top-color:#9d9d9d"></div>
<svg style="left:16px;top:59px" width="14" height="14"><circle cx="5.5" cy="5.5" r="3.800000000000001" fill="none" stroke="#8a8a8a" stroke-width="1.2"/><path d="M8.3 8.3l4 4" stroke="#8a8a8a" stroke-width="1.5"/></svg>
<div style="left:9px;top:77px;width:136px;height:707px;background:#5d5d5d"></div>
<div style="left:9px;top:191px;width:136px;height:36px;background:#f0f0f0"></div>
<div style="left:145px;top:77px;width:14px;height:6px;background:#5d5d5d"></div>
<div style="left:145px;top:83px;width:14px;height:701px;background:#f0f0f0"></div>
<div style="left:145px;top:95px;width:14px;height:641px;background:linear-gradient(90deg,#fdfdfd,#fafafa 40%,#efefef);border-top:1px solid #d6d6d6;border-bottom:1px solid #d6d6d6"></div>
<div style="left:145px;top:736px;width:14px;height:35px;background:#e4e4e4"></div>
<svg style="left:148px;top:85px" width="10" height="8"><path d="M1 6l4-4.500000000000001 4 4.500000000000001z" fill="#444"/></svg>
<svg style="left:148px;top:773px" width="10" height="8"><path d="M1 1.500000000000001l4 4.500000000000001 4-4.500000000000001z" fill="#444"/></svg>
<svg style="left:14px;top:89px;overflow:visible" width="24" height="24" viewBox="0 0 24 24"><defs><radialGradient id="ig" cx=".4" cy=".3" r=".8"><stop offset="0" stop-color="#8ab4e6"/><stop offset="1" stop-color="#4f86cc"/></radialGradient></defs><circle cx="12" cy="12" r="11.5" fill="url(#ig)" stroke="#4477b8" stroke-width=".8"/><circle cx="13.2" cy="6" r="1.900000000000001" fill="#fff"/><path d="M8.5 10.5c2-1 4-1.500000000000001 5.5-.8l-2 7c-.2.8.2 1 1 .6l1-.6.3.8c-1.700000000000001 1.300000000000001-3.500000000000001 2-5 1.500000000000001-.8-.4-1-1.100000000000001-.7-2.100000000000001l1.500000000000001-5c.2-.7-.1-.9-1.300000000000001-.7z" fill="#fff"/></svg>
<span class="t" style="left:46px;top:94px;font-size:12.2px;line-height:16px;color:#fff;letter-spacing:0.203px;">Information</span>
<svg style="left:14px;top:125px;overflow:visible" width="24" height="24" viewBox="0 0 24 24"><circle cx="13.5" cy="13" r="8" fill="#dcdcdc" stroke="#f4f4f4" stroke-width="2.4" stroke-dasharray="3.2 2.6"/><circle cx="13.5" cy="13" r="6.2" fill="#cfcfcf"/><circle cx="13.5" cy="13" r="4.4" fill="#5b8ed0"/><path d="M1 5C1.500000000000001 2 4 .3 7 .8L4.500000000000001 3.500000000000001l.8 3 3 .8L11 4.500000000000001c.8 2.800000000000001-.5 5.500000000000001-3.200000000000001 6.500000000000001L6 9.5 4.500000000000001 10.5C2.500000000000001 9.5 1 7.500000000000001 1 5z" fill="#f4f4f4" stroke="#555" stroke-width=".6"/><path d="M8.2 8.8l2.600000000000001-2.400000000000001 11 11.200000000000001-2.600000000000001 2.600000000000001z" fill="#ecd86a" stroke="#6a5a1a" stroke-width=".7"/><path d="M18.900000000000002 19.700000000000003l2.700000000000001-2.700000000000001 1.800000000000001 1.800000000000001-2.800000000000001 2.800000000000001z" fill="#777"/></svg>
<span class="t" style="left:46px;top:130px;font-size:12.2px;line-height:16px;color:#fff;letter-spacing:-0.465px;">Source</span>
<svg style="left:14px;top:161px;overflow:visible" width="24" height="24" viewBox="0 0 24 24"><path d="M1 16l8-12 9 2-6 14z" fill="#d83a32"/><path d="M3.500000000000001 12l5.500000000000001-8 9 2-4 8z" fill="#4c7fc4"/><path d="M6 8l3-5 9 2.500000000000001-2.500000000000001 4z" fill="#ecc93c"/><path d="M12.5 12.5l8.5-10 2 1.500000000000001-8 10.5z" fill="#d68a20"/><path d="M8 15.500000000000002l5-4.500000000000001 5.5 5-5.500000000000001 6.000000000000001z" fill="#d9a861" stroke="#a5722d" stroke-width=".7"/><path d="M10 17l4-3M11.500000000000002 18.500000000000004l4-3.500000000000001M13 20l3.500000000000001-3" stroke="#b98742" stroke-width=".6"/></svg>
<span class="t" style="left:46px;top:166px;font-size:12.2px;line-height:16px;color:#fff;letter-spacing:-0.037px;">Symbology</span>
<svg style="left:17px;top:197px;overflow:visible" width="24" height="24" viewBox="0 0 24 24"><path d="M6 6h17.5v12H6L.8 12z" fill="#b5cc8d" stroke="#8fae5d" stroke-width="1"/><text x="6.2" y="15.4" font-family="Liberation Sans" font-weight="bold" font-size="9.6" fill="#26466c" letter-spacing=".2">abc</text></svg>
<span class="t" style="left:49.4px;top:202px;font-size:11.84px;line-height:16px;color:#000;letter-spacing:-0.450px;">Labels</span>
<svg style="left:14px;top:233px;overflow:visible" width="24" height="24" viewBox="0 0 24 24"><rect x="-1.800000000000001" y="4.2" width="27.6" height="15" rx="7.5" fill="#f2f2f6"/><text x=".4" y="16" font-family="Liberation Sans" font-weight="bold" font-size="12.6" fill="#2a2a2a" letter-spacing=".5">abc</text></svg>
<span class="t" style="left:46px;top:238px;font-size:11.99px;line-height:16px;color:#fff;letter-spacing:-0.450px;">Masks</span>
<svg style="left:14px;top:269px;overflow:visible" width="24" height="24" viewBox="0 0 24 24"><circle cx="9" cy="8.5" r="7.5" fill="#2fae4d" stroke="#1c6b2c" stroke-width=".8"/><path d="M9 8.5V1a7.5 7.5 0 0 1 6.800000000000001 4.300000000000001z" fill="#f2c512" stroke="#96750a" stroke-width=".6"/><path d="M9 8.5l6.800000000000001-3.2A7.5 7.5 0 0 1 9.5 16z" fill="#c3261f" stroke="#6e120e" stroke-width=".6"/><path d="M9 8.5L2.5 4.7A7.5 7.5 0 0 1 9 1z" fill="#f2c512"/><rect x="10" y="16" width="4" height="8" fill="#f2c512" stroke="#b78f09" stroke-width=".6"/><rect x="14.5" y="11" width="4" height="13" fill="#2fae4d" stroke="#1c6b2c" stroke-width=".6"/><rect x="19" y="18" width="4" height="6" fill="#c3261f" stroke="#6e120e" stroke-width=".6"/></svg>
<span class="t" style="left:46px;top:274px;font-size:12.2px;line-height:16px;color:#fff;letter-spacing:-0.351px;">Diagrams</span>
<svg style="left:14px;top:305px;overflow:visible" width="24" height="24" viewBox="0 0 24 24"><rect x=".5" y="1.500000000000001" width="23" height="21.500000000000004" rx="1" fill="#e7eef7" stroke="#6f97c8" stroke-width="1"/><rect x="1.500000000000001" y="2.500000000000001" width="21.000000000000004" height="4" fill="#8eb0da"/><path d="M4 10h16.500000000000004M4 14h16.500000000000004M4 18h16.500000000000004" stroke="#6f97c8" stroke-width="1.4"/><rect x="5.5" y=".5" width="5.5" height="23" fill="#f4ea8c" stroke="#e6d400" stroke-width="1"/><rect x="7.300000000000001" y="3.500000000000001" width="2" height="2" fill="#fff"/></svg>
<span class="t" style="left:46px;top:310px;font-size:12.2px;line-height:16px;color:#fff;letter-spacing:-0.503px;">Fields</span>
<svg style="left:14px;top:341px;overflow:visible" width="24" height="24" viewBox="0 0 24 24"><rect x=".5" y="1.500000000000001" width="23" height="21.500000000000004" rx="1" fill="#e5e5e5" stroke="#6f97c8" stroke-width="1.2"/><rect x="4" y="7" width="4.5" height="2" fill="#34577f"/><rect x="4" y="15.500000000000002" width="4.5" height="2" fill="#34577f"/><rect x="11" y="5" width="9.5" height="5.5" fill="#fff" stroke="#6f97c8" stroke-width="1"/><rect x="11" y="13.5" width="9.5" height="5.5" fill="#fff" stroke="#6f97c8" stroke-width="1"/></svg>
<span class="t" style="left:46px;top:346px;font-size:12.2px;line-height:16px;color:#fff;letter-spacing:-0.051px;">Attributes Form</span>
<svg style="left:14px;top:377px;overflow:visible" width="24" height="24" viewBox="0 0 24 24"><defs><linearGradient id="jg" x1="0" x2="1"><stop offset="0" stop-color="#3a6fb0"/><stop offset="1" stop-color="#7fa9dc"/></linearGradient></defs><path d="M24 1.500000000000001v21L6.5 12z" fill="url(#jg)"/><circle cx="2.700000000000001" cy="12" r="2.700000000000001" fill="#5e90cf"/></svg>
<span class="t" style="left:46px;top:382px;font-size:11.92px;line-height:16px;color:#fff;letter-spacing:-0.450px;">Joins</span>
<svg style="left:14px;top:413px;overflow:visible" width="24" height="24" viewBox="0 0 24 24"><path d="M8 .5h11l5 5V23.5H8z" fill="#fff" stroke="#d8d8d8" stroke-width=".5"/><path d="M19 .5v5h5z" fill="#d5d5d5"/><defs><linearGradient id="cg" x1="0" x2="1"><stop offset="0" stop-color="#8a8a8a"/><stop offset=".5" stop-color="#d8d8d8"/><stop offset="1" stop-color="#8a8a8a"/></linearGradient></defs><path d="M0 9.5v11c0 1.900000000000001 3.500000000000001 3.300000000000001 7.800000000000001 3.300000000000001s7.800000000000001-1.400000000000001 7.800000000000001-3.300000000000001v-11z" fill="url(#cg)"/><ellipse cx="7.800000000000001" cy="9.5" rx="7.800000000000001" ry="3" fill="#e4e4e4" stroke="#8c8c8c" stroke-width=".5"/><path d="M0 15c0 1.900000000000001 3.500000000000001 3.300000000000001 7.800000000000001 3.300000000000001s7.800000000000001-1.400000000000001 7.800000000000001-3.300000000000001" fill="none" stroke="#6e6e6e" stroke-width=".8"/></svg>
<span class="t" style="left:46px;top:418px;font-size:12.2px;line-height:16px;color:#fff;letter-spacing:-0.209px;">Auxiliary Storage</span>
<svg style="left:14px;top:449px;overflow:visible" width="24" height="24" viewBox="0 0 24 24"><circle cx="14.5" cy="10" r="8" fill="#e9e9e9" stroke="#e9e9e9" stroke-width="3" stroke-dasharray="3.4 2.9"/><circle cx="14.5" cy="10" r="8" fill="#e4e4e4"/><circle cx="14.5" cy="10" r="5.5" fill="#5b8ed0" stroke="#3a67a6" stroke-width=".7"/><path d="M12.5 7l5 3-5 3z" fill="#fff"/><circle cx="3.800000000000001" cy="20" r="3.300000000000001" fill="#dfdfdf" stroke="#dfdfdf" stroke-width="1.500000000000001" stroke-dasharray="1.500000000000001 1.300000000000001"/><circle cx="3.800000000000001" cy="20" r="2.300000000000001" fill="#5b8ed0"/></svg>
<span class="t" style="left:46px;top:454px;font-size:12.2px;line-height:16px;color:#fff;letter-spacing:-0.045px;">Actions</span>
<svg style="left:14px;top:485px;overflow:visible" width="24" height="24" viewBox="0 0 24 24"><path d="M4 2.500000000000001h16a3.500000000000001 3.500000000000001 0 0 1 3.500000000000001 3.500000000000001v7a3.500000000000001 3.500000000000001 0 0 1-3.500000000000001 3.500000000000001H13L6.5 22.500000000000004l1.500000000000001-6.000000000000001H4A3.500000000000001 3.500000000000001 0 0 1 .5 13V6A3.500000000000001 3.500000000000001 0 0 1 4 2.500000000000001z" fill="#efe08c" stroke="#cdb84a" stroke-width="1"/><path d="M3 8c0-2.500000000000001 1.500000000000001-3.500000000000001 4-3.500000000000001h9" stroke="#fffbe0" stroke-width="1.500000000000001" fill="none"/></svg>
<span class="t" style="left:46px;top:490px;font-size:12.2px;line-height:16px;color:#fff;letter-spacing:-0.328px;">Display</span>
<svg style="left:14px;top:521px;overflow:visible" width="24" height="24" viewBox="0 0 24 24"><path d="M11.500000000000002 10.5L21 .8l2 1.700000000000001-9 10.5z" fill="#e09a2a"/><path d="M1.500000000000001 13.5l7.5-6.5 6.5 7-7 7.500000000000001z" fill="#dcaa5e" stroke="#b27a2a" stroke-width=".8"/><path d="M4 15l5.5-5M6 17l5.500000000000001-5M8 19l5-4.500000000000001" stroke="#bb8a44" stroke-width=".7"/></svg>
<span class="t" style="left:46px;top:526px;font-size:12.2px;line-height:16px;color:#fff;letter-spacing:-0.256px;">Rendering</span>
<svg style="left:14px;top:557px;overflow:visible" width="24" height="24" viewBox="0 0 24 24"><text x="2.5" y="22" font-family="Liberation Serif" font-size="40" fill="#6d2d80" stroke="#6d2d80" stroke-width=".3">ε</text></svg>
<span class="t" style="left:46px;top:562px;font-size:12.2px;line-height:16px;color:#fff;letter-spacing:-0.488px;">Variables</span>
<svg style="left:14px;top:593px;overflow:visible" width="24" height="24" viewBox="0 0 24 24"><path d="M2.500000000000001 .5h12l5 5V23.5h-17z" fill="#fff" stroke="#cfcfcf" stroke-width=".6"/><path d="M14.5 .5v5h5z" fill="#d9d9d9"/><path d="M5 9h10M5 12h9M5 15h8M5 18h11M5 21h11" stroke="#9a9a9a" stroke-width=".9"/><path d="M20.500000000000004 2.500000000000001l3 1.700000000000001-6.500000000000001 11.500000000000002-3.500000000000001 2.300000000000001.5-4z" fill="#e8742a"/><path d="M14 14l3 1.700000000000001-3.500000000000001 2.300000000000001z" fill="#f3d6b0"/></svg>
<span class="t" style="left:46px;top:598px;font-size:12.2px;line-height:16px;color:#fff;letter-spacing:-0.161px;">Metadata</span>
<svg style="left:14px;top:629px;overflow:visible" width="24" height="24" viewBox="0 0 24 24"><rect x="3" y="1" width="11" height="13" fill="#e9e9e9"/><rect x="10" y="8" width="12" height="14" fill="#e0e0e0"/><path d="M12 3.500000000000001h7v6h3l-5 5.5-5-5.500000000000001h3V6.5h-3z" fill="#6d9fe0" stroke="#3f73bb" stroke-width=".8"/><path d="M12.5 20.500000000000004h-7v-6h-3l5-5.5 5 5.500000000000001h-3v3h3z" fill="#6d9fe0" stroke="#3f73bb" stroke-width=".8"/></svg>
<span class="t" style="left:46px;top:634px;font-size:12.2px;line-height:16px;color:#fff;letter-spacing:-0.357px;">Dependencies</span>
<svg style="left:14px;top:665px;overflow:visible" width="24" height="24" viewBox="0 0 24 24"><rect x="1.500000000000001" y="2.500000000000001" width="5" height="5" fill="#f6c40e" stroke="#e8a800" stroke-width=".8"/><rect x="1.500000000000001" y="9.5" width="5" height="5" fill="#ef4a16" stroke="#d83a0a" stroke-width=".8"/><rect x="1.500000000000001" y="16.500000000000004" width="5" height="5" fill="#19a352" stroke="#0c7a38" stroke-width=".8"/><path d="M8.5 6h6.5M8.5 13h10M8.5 20h4" stroke="#9b9b9b" stroke-width="1.600000000000001"/></svg>
<span class="t" style="left:46px;top:670px;font-size:12.2px;line-height:16px;color:#fff;letter-spacing:-0.394px;">Legend</span>
<svg style="left:14px;top:701px;overflow:visible" width="24" height="24" viewBox="0 0 24 24"><path d="M1.500000000000001 4.5c1-1 2-1 3 0h19v13h-19c-1 1-2 1-3 0z" fill="#e4e4e4" stroke="#bdbdbd" stroke-width=".8"/><rect x="4" y="6.5" width="18" height="9.5" fill="#fff"/><path d="M4 9c3-2 5 0 7 1.500000000000001s4 2 5.500000000000001-.5 3.500000000000001-3 5.500000000000001-2.500000000000001V6.5H4z" fill="#6c9fdf"/><path d="M4 16c1-3.500000000000001 3-5 5-4s1 4 2 4z" fill="#6c9fdf"/><path d="M17.5 16l4.5-4.500000000000001V16z" fill="#666"/></svg>
<span class="t" style="left:46px;top:706px;font-size:11.45px;line-height:16px;color:#fff;letter-spacing:-0.450px;">QGIS Server</span>
<svg style="left:14px;top:737px;overflow:visible" width="24" height="24" viewBox="0 0 24 24"><path d="M1.500000000000001 6.5c1-1 2-1 3 0h19v13h-19c-1 1-2 1-3 0z" fill="#e4e4e4" stroke="#bdbdbd" stroke-width=".8"/><path d="M6 10l3 2-2 3 3 1.500000000000001M11 9l2 3-2 3.500000000000001M19 9l1.500000000000001 4-2 3" stroke="#b4b4b4" stroke-width="1.200000000000001" fill="none"/><path d="M19 1l2.500000000000001 1.200000000000001-6.500000000000001 13.5-3 2.300000000000001.5-3.800000000000001z" fill="#ead35a" stroke="#a89222" stroke-width=".6"/><path d="M12.5 14.2l-.5 3.800000000000001 3-2.300000000000001z" fill="#777"/></svg>
<span class="t" style="left:46px;top:742px;font-size:12.2px;line-height:16px;color:#fff;letter-spacing:0.027px;">Digitizing</span>
<svg style="left:14px;top:773px;overflow:hidden" width="24" height="11" viewBox="0 0 24 11"><path d="M12 8.5l11 6-11 6-11-6z" fill="#e9d642" stroke="#a8971a" stroke-width=".8"/><path d="M12 6.5l11 6-11 6-11-6z" fill="#63b84a" stroke="#2f7a22" stroke-width=".8"/><path d="M12 1.500000000000001l11 6.500000000000001-11 6.500000000000001-11-6.500000000000001z" fill="#f6a0a0" stroke="#c01818" stroke-width="1.300000000000001"/></svg>
<div style="left:46px;top:776px;width:60px;height:8px;overflow:hidden"><span class="t" style="left:0;top:3px;font-size:12.2px;line-height:16px;color:#fff">3D View</span></div>
<div class="btn" style="left:163px;top:58px;width:637px;height:23.5px"></div>
<svg style="left:784px;top:67.35px" width="9" height="5.8"><path d="M1 1h7l-3.5 3.8z" fill="#4a4a4a"/></svg>
<svg style="left:170px;top:65px" width="15" height="10"><path d="M3.500000000000001 .8h10.700000000000001v8H3.500000000000001L.6 4.800000000000001z" fill="#f0dc5a" stroke="#c7ad22" stroke-width=".8"/><text x="4" y="7" font-family="Liberation Sans" font-weight="bold" font-size="5.5" fill="#4a4a2a">abc</text></svg>
<span class="t" style="left:187.4px;top:63px;font-size:11px;line-height:16px;color:#000;letter-spacing:-0.422px;">Single Labels</span>
<div class="btn" style="left:807px;top:58px;width:24px;height:23.5px"></div>
<svg style="left:810px;top:60px" width="20" height="20"><g transform="rotate(40 7 7)"><rect x="3" y="1" width="8" height="9" fill="#44597a"/><rect x="4.2" y="2" width="1.500000000000001" height="1.500000000000001" fill="#cfd8e6"/><rect x="6.3" y="2" width="1.500000000000001" height="1.500000000000001" fill="#cfd8e6"/><rect x="8.3" y="2" width="1.500000000000001" height="1.500000000000001" fill="#cfd8e6"/><rect x="4.2" y="4.200000000000001" width="1.500000000000001" height="1.500000000000001" fill="#cfd8e6"/><rect x="6.3" y="4.200000000000001" width="1.500000000000001" height="1.500000000000001" fill="#cfd8e6"/></g><circle cx="11.5" cy="12" r="5.2" fill="#f3d73a" stroke="#f3d73a" stroke-width="2" stroke-dasharray="2 1.600000000000001"/><circle cx="11.5" cy="12" r="5" fill="#f3d73a"/><circle cx="11.5" cy="12" r="2" fill="#fff7c2" stroke="#c6a81b" stroke-width=".6"/></svg>
<span class="t" style="left:162.7px;top:93px;font-size:11px;line-height:16px;color:#000;letter-spacing:-0.407px;">Value</span>
<div class="inp" style="left:195px;top:88px;width:605px;height:23.5px"></div>
<div style="left:779px;top:89px;width:20px;height:21.5px;border-left:1px solid #c8c8c8;background:linear-gradient(#fbfbfb,#ebebeb);border-radius:0 2px 2px 0"></div>
<svg style="left:784.5px;top:97.35px" width="9" height="5.8"><path d="M1 1h7l-3.5 3.8z" fill="#4a4a4a"/></svg>
<span class="t" style="left:199px;top:92.5px;font-size:9.22px;line-height:16px;color:#505050;letter-spacing:-0.450px;font-weight:bold;">abc</span>
<span class="t" style="left:218.5px;top:93px;font-size:11px;line-height:16px;color:#000;letter-spacing:-0.544px;">name</span>
<div class="btn" style="left:807px;top:88px;width:24px;height:23.5px"></div>
<span class="t" style="left:812.2px;top:86.3px;font-size:22px;line-height:24px;color:#5e2a6e;font-family:'Liberation Serif',serif;-webkit-text-stroke:.2px #5e2a6e;transform:scaleX(1.13);transform-origin:0 0;">ε</span>
<svg style="left:165px;top:123px" width="14" height="10"><path d="M.6 1h10.8L6 8.4z" fill="#333"/></svg>
<span class="t" style="left:184px;top:118.5px;font-size:12px;line-height:16px;color:#000;letter-spacing:0.119px;font-weight:bold;">Text Sample</span>
<div style="left:164px;top:136px;width:667px;height:104px;border:1px solid #d4d4d4;border-radius:2px;background:#efefef"></div>
<div style="left:166px;top:144px;width:662px;height:70px;background:#fff;border:1px solid #8f8f8f;border-bottom-color:#c4c4c4;border-right-color:#c4c4c4"></div>
<span class="t" style="left:181px;top:156px;font-size:17.33px;line-height:22px;color:#111;letter-spacing:-0.512px;">Lorem Ipsum</span>
<div style="left:813px;top:145px;width:14px;height:68px;background:#fff;border:1px solid #d6d6d6"></div>
<div style="left:814px;top:158px;width:12px;height:27px;background:#fdfdfd;border-bottom:1px solid #d6d6d6;border-top:1px solid #d6d6d6"></div>
<div style="left:814px;top:185px;width:12px;height:14px;background:#e6e6e6"></div>
<div style="left:814px;top:199px;width:12px;height:1px;background:#d6d6d6"></div>
<svg style="left:815px;top:147px" width="10" height="8"><path d="M1.500000000000001 6l3.500000000000001-4 3.500000000000001 4z" fill="#444"/></svg>
<svg style="left:815px;top:203px" width="10" height="8"><path d="M1.500000000000001 1.500000000000001l3.500000000000001 4 3.500000000000001-4z" fill="#444"/></svg>
<div class="inp" style="left:166px;top:215px;width:403px;height:21px;border-radius:2px"></div>
<span class="t" style="left:168.6px;top:218px;font-size:11px;line-height:16px;color:#000;letter-spacing:-0.380px;">Lorem Ipsum</span>
<div class="btn" style="left:570px;top:215px;width:23px;height:21px"></div>
<svg style="left:574px;top:218px" width="15" height="15"><path d="M6.5 1.500000000000001L1 6l5.5 4.500000000000001V7.500000000000001c3.500000000000001-.3 5 1.500000000000001 3.500000000000001 5.000000000000001 4-3 3.500000000000001-8.5-3.500000000000001-8.5z" fill="#e8792b"/></svg>
<div class="inp" style="left:599px;top:215px;width:81px;height:21px"></div>
<div style="left:659px;top:216px;width:20px;height:19px;border-left:1px solid #c8c8c8;background:linear-gradient(#fbfbfb,#ebebeb);border-radius:0 2px 2px 0"></div>
<svg style="left:664.5px;top:223.1px" width="9" height="5.8"><path d="M1 1h7l-3.5 3.8z" fill="#4a4a4a"/></svg>
<span class="t" style="left:603.7px;top:218px;font-size:11px;line-height:16px;color:#000;letter-spacing:-0.144px;">1:35423</span>
<div class="btn" style="left:686px;top:215px;width:24px;height:21px"></div>
<svg style="left:689px;top:217px" width="19" height="17"><rect x="1" y="2" width="14" height="10" fill="#c9d3dd" stroke="#8695a6" stroke-width=".8"/><rect x="2.500000000000001" y="3" width="4" height="7" fill="#6d87a6"/><path d="M6 3.500000000000001l9 6.500000000000001-3.800000000000001.3 2.300000000000001 4-1.600000000000001.9-2.200000000000001-4.000000000000001-2.500000000000001 2.500000000000001z" fill="#fff" stroke="#222" stroke-width=".8"/></svg>
<div class="btn" style="left:711px;top:215px;width:11px;height:21px"></div>
<svg style="left:712px;top:223.5px" width="9" height="6"><path d="M1 1h7l-3.5 4z" fill="#4a4a4a"/></svg>
<div class="btn" style="left:728px;top:215px;width:88px;height:21px"></div>
<div style="left:732px;top:217px;width:80px;height:17px;background:#fafafa;border-radius:2px"></div>
<div class="btn" style="left:816px;top:215px;width:12px;height:21px"></div>
<svg style="left:817.5px;top:223.5px" width="9" height="6"><path d="M1 1h7l-3.5 4z" fill="#4a4a4a"/></svg>
<svg style="left:487px;top:241px" width="20" height="3"><g fill="#bdbdbd"><rect x="0" y="1" width="1" height="1"/><rect x="3" y="1" width="1" height="1"/><rect x="6" y="1" width="1" height="1"/><rect x="9" y="1" width="1" height="1"/><rect x="12" y="1" width="1" height="1"/><rect x="15" y="1" width="1" height="1"/></g></svg>
<div style="left:166px;top:244px;width:112px;height:510px;background:#fff;border:1px solid #a5a5a5"></div>
<div style="left:167px;top:245px;width:110px;height:22px;background:#f0f0f0"></div>
<svg style="left:170px;top:247px" width="20" height="18" viewBox="0 0 20 18"><text x=".6" y="12.6" font-family="Liberation Sans" font-weight="bold" font-size="10.4" fill="#2e5876" letter-spacing=".25">abc</text></svg>
<span class="t" style="left:196px;top:249px;font-size:12.2px;line-height:16px;color:#000;letter-spacing:-0.386px;">Text</span>
<svg style="left:170px;top:269px" width="20" height="18" viewBox="0 0 20 18"><path d="M2 4.500000000000001h5M4.500000000000001 2v5" stroke="#8a8a8a" stroke-width="1"/><text x="8" y="8" font-family="Liberation Sans" font-weight="bold" font-size="9.5" fill="#2a2a2a">ab</text><path d="M7 10.5l-5 2.500000000000001 5 2.500000000000001" stroke="#8a8a8a" stroke-width="1" fill="none"/><text x="13.5" y="16.500000000000004" font-family="Liberation Sans" font-weight="bold" font-size="9.5" fill="#2a2a2a">c</text></svg>
<span class="t" style="left:196px;top:271px;font-size:12.2px;line-height:16px;color:#000;letter-spacing:0.050px;">Formatting</span>
<svg style="left:170px;top:291px" width="20" height="18" viewBox="0 0 20 18"><rect x="0" y="3" width="20" height="12.5" rx="6.2" fill="#9aa8f4"/><text x="2.6" y="12.4" font-family="Liberation Sans" font-weight="bold" font-size="9" fill="#2e3f86" letter-spacing=".1">abc</text></svg>
<span class="t" style="left:196px;top:293px;font-size:12.2px;line-height:16px;color:#000;letter-spacing:-0.059px;">Buffer</span>
<svg style="left:170px;top:313px" width="20" height="18" viewBox="0 0 20 18"><rect x=".4" y="3.2" width="19.200000000000003" height="12" rx="6" fill="#f8f8fa" stroke="#b4b4c2" stroke-width=".9"/><text x="3" y="12.2" font-family="Liberation Sans" font-weight="bold" font-size="8.6" fill="#4a4a4a" letter-spacing=".1">abc</text></svg>
<span class="t" style="left:196px;top:315px;font-size:12.2px;line-height:16px;color:#000;letter-spacing:-0.375px;">Mask</span>
<svg style="left:170px;top:335px" width="20" height="18" viewBox="0 0 20 18"><path d="M.8 3c2.500000000000001.800000000000001 4.500000000000001-.3 5.500000000000001-1.800000000000001 2 1.300000000000001 5.500000000000001 1.300000000000001 7.500000000000001 0 1 1.500000000000001 3 2.600000000000001 5.500000000000001 1.800000000000001V6.500000000000001H.8z" fill="#cf2229"/><path d="M.8 5.800000000000001h18.500000000000004c.5 5.5-3.500000000000001 9-9.200000000000001 10.700000000000001C4.500000000000001 15.800000000000002.3 12.3.8 6.800000000000001z" fill="#2461b3"/></svg>
<span class="t" style="left:196px;top:337px;font-size:12.2px;line-height:16px;color:#000;letter-spacing:-0.161px;">Background</span>
<svg style="left:170px;top:357px" width="20" height="18" viewBox="0 0 20 18"><path d="M3 3.500000000000001c2.500000000000001.7 4-.2 5-1.500000000000001 2 1.200000000000001 5 1.200000000000001 7 0 1 1.300000000000001 2.500000000000001 2.200000000000001 5 1.500000000000001v5c0 4.500000000000001-4 7.500000000000001-8.5 9C7 16 3 13 3 8.5z" fill="#4a4f5c"/><path d="M1 2.500000000000001c2.500000000000001.7 4-.2 5-1.500000000000001 2 1.200000000000001 5 1.200000000000001 7 0 1 1.300000000000001 2.500000000000001 2.200000000000001 5 1.500000000000001v5c0 4.500000000000001-4 7.500000000000001-8.5 9C5 15 1 12 1 7.500000000000001z" fill="#eef2ff" stroke="#b0b8d4" stroke-width=".6"/></svg>
<span class="t" style="left:196px;top:359px;font-size:12.2px;line-height:16px;color:#000;letter-spacing:-0.449px;">Shadow</span>
<svg style="left:170px;top:379px" width="20" height="18" viewBox="0 0 20 18"><text x="1.500000000000001" y="8" font-family="Liberation Sans" font-weight="bold" font-size="9.6" fill="#2a2a2a">abc</text><path d="M3.500000000000001 18l5.800000000000001-8" stroke="#222" stroke-width="1.400000000000001"/></svg>
<span class="t" style="left:196px;top:381px;font-size:12.2px;line-height:16px;color:#000;letter-spacing:-0.162px;">Callouts</span>
<svg style="left:170px;top:401px" width="20" height="18" viewBox="0 0 20 18"><g fill="#6f94bd" stroke="#8a9bb0" stroke-width=".7"><path d="M10 .8l3.500000000000001 3.800000000000001-3.500000000000001 2.600000000000001-3.500000000000001-2.600000000000001z"/><path d="M10 17.200000000000003l3.500000000000001-3.800000000000001-3.500000000000001-2.600000000000001-3.500000000000001 2.600000000000001z"/><path d="M1.200000000000001 9l3.800000000000001-3.500000000000001 2.600000000000001 3.500000000000001-2.600000000000001 3.500000000000001z"/><path d="M18.8 9l-3.800000000000001-3.500000000000001-2.600000000000001 3.500000000000001 2.600000000000001 3.500000000000001z"/></g></svg>
<span class="t" style="left:196px;top:403px;font-size:12.2px;line-height:16px;color:#000;letter-spacing:-0.199px;">Placement</span>
<svg style="left:170px;top:423px" width="20" height="18" viewBox="0 0 20 18"><path d="M18 .5c-1.500000000000001 5-4.500000000000001 9.5-9 13l-2-1.800000000000001C11.500000000000002 8.5 15.500000000000002 4.500000000000001 18 .5z" fill="#737373"/><path d="M6.5 12l2.200000000000001 2c-1.800000000000001 2.500000000000001-4.500000000000001 3.500000000000001-7.700000000000001 3.300000000000001 2.200000000000001-.8 3.800000000000001-2.600000000000001 5.500000000000001-5.300000000000001z" fill="#909090"/></svg>
<span class="t" style="left:196px;top:425px;font-size:12.2px;line-height:16px;color:#000;letter-spacing:-0.331px;">Rendering</span>
<span class="t" style="left:282px;top:243px;font-size:11px;line-height:16px;color:#000;letter-spacing:0.038px;">Text</span>
<span class="t" style="left:282px;top:269px;font-size:11px;line-height:16px;color:#000;letter-spacing:-0.272px;">Font</span>
<div class="inp" style="left:325px;top:264px;width:464px;height:24px"></div>
<div style="left:768px;top:265px;width:20px;height:22px;border-left:1px solid #c8c8c8;background:linear-gradient(#fbfbfb,#ebebeb);border-radius:0 2px 2px 0"></div>
<svg style="left:773.5px;top:273.6px" width="9" height="5.8"><path d="M1 1h7l-3.5 3.8z" fill="#4a4a4a"/></svg>
<span class="t" style="left:328.7px;top:269px;font-size:11px;line-height:16px;color:#000;letter-spacing:-0.354px;">Arial</span>
<svg style="left:797.5px;top:268px" width="24" height="17" viewBox="0 0 24 17"><path d="M.3 8L6 2.500000000000001v11z" fill="#8e8e8e"/><rect x="6.300000000000001" y=".8" width="11.600000000000001" height="14.600000000000001" fill="#fff" stroke="#7d7d7d" stroke-width="1"/><rect x="8.3" y="3" width="7.6" height="2" fill="#4d4d4d"/><rect x="8.3" y="7.5" width="7.6" height="1" fill="#808080"/><rect x="8.3" y="11" width="7.6" height="1.200000000000001" fill="#5a5a5a"/><path d="M16.3 11.8h7l-3.500000000000001 3.800000000000001z" fill="#4a4a4a"/></svg>
<span class="t" style="left:282px;top:307px;font-size:11px;line-height:16px;color:#000;letter-spacing:-0.267px;">Style</span>
<div class="btn" style="left:325px;top:303px;width:464px;height:22px"></div>
<svg style="left:773px;top:311.6px" width="9" height="5.8"><path d="M1 1h7l-3.5 3.8z" fill="#4a4a4a"/></svg>
<span class="t" style="left:329.2px;top:307px;font-size:11px;line-height:16px;color:#000;letter-spacing:-0.339px;">Regular</span>
<svg style="left:797.5px;top:306px" width="24" height="17" viewBox="0 0 24 17"><path d="M.3 8L6 2.500000000000001v11z" fill="#8e8e8e"/><rect x="6.300000000000001" y=".8" width="11.600000000000001" height="14.600000000000001" fill="#fff" stroke="#7d7d7d" stroke-width="1"/><rect x="8.3" y="3" width="7.6" height="2" fill="#4d4d4d"/><rect x="8.3" y="7.5" width="7.6" height="1" fill="#808080"/><rect x="8.3" y="11" width="7.6" height="1.200000000000001" fill="#5a5a5a"/><path d="M16.3 11.8h7l-3.500000000000001 3.800000000000001z" fill="#4a4a4a"/></svg>
<div class="btn" style="left:325px;top:334px;width:24px;height:24px;"></div>
<span class="t" style="left:330.5px;top:336px;font-size:16px;line-height:20px;color:#111;text-decoration:underline;">U</span>
<svg style="left:357.5px;top:338px" width="24" height="17" viewBox="0 0 24 17"><path d="M.3 8L6 2.500000000000001v11z" fill="#8e8e8e"/><rect x="6.300000000000001" y=".8" width="11.600000000000001" height="14.600000000000001" fill="#fff" stroke="#7d7d7d" stroke-width="1"/><rect x="8.3" y="3" width="7.6" height="2" fill="#4d4d4d"/><rect x="8.3" y="7.5" width="7.6" height="1" fill="#808080"/><rect x="8.3" y="11" width="7.6" height="1.200000000000001" fill="#5a5a5a"/><path d="M16.3 11.8h7l-3.500000000000001 3.800000000000001z" fill="#4a4a4a"/></svg>
<div class="btn" style="left:391px;top:334px;width:24px;height:24px;"></div>
<span class="t" style="left:397px;top:336px;font-size:16px;line-height:20px;color:#111;text-decoration:line-through;">S</span>
<svg style="left:423.5px;top:338px" width="24" height="17" viewBox="0 0 24 17"><path d="M.3 8L6 2.500000000000001v11z" fill="#8e8e8e"/><rect x="6.300000000000001" y=".8" width="11.600000000000001" height="14.600000000000001" fill="#fff" stroke="#7d7d7d" stroke-width="1"/><rect x="8.3" y="3" width="7.6" height="2" fill="#4d4d4d"/><rect x="8.3" y="7.5" width="7.6" height="1" fill="#808080"/><rect x="8.3" y="11" width="7.6" height="1.200000000000001" fill="#5a5a5a"/><path d="M16.3 11.8h7l-3.500000000000001 3.800000000000001z" fill="#4a4a4a"/></svg>
<div class="btn" style="left:699px;top:334px;width:24px;height:24px;background:#f3f3f3;border-color:#d0d0d0"></div>
<span class="t" style="left:705px;top:336.5px;font-size:18px;line-height:20px;color:#7a7a7a;font-family:'Liberation Serif',serif;">B</span>
<svg style="left:731.5px;top:338px" width="24" height="17" viewBox="0 0 24 17"><path d="M.3 8L6 2.500000000000001v11z" fill="#8e8e8e"/><rect x="6.300000000000001" y=".8" width="11.600000000000001" height="14.600000000000001" fill="#fff" stroke="#7d7d7d" stroke-width="1"/><rect x="8.3" y="3" width="7.6" height="2" fill="#4d4d4d"/><rect x="8.3" y="7.5" width="7.6" height="1" fill="#808080"/><rect x="8.3" y="11" width="7.6" height="1.200000000000001" fill="#5a5a5a"/><path d="M16.3 11.8h7l-3.500000000000001 3.800000000000001z" fill="#4a4a4a"/></svg>
<div class="btn" style="left:765px;top:334px;width:24px;height:24px;background:#f3f3f3;border-color:#d0d0d0"></div>
<span class="t" style="left:773.5px;top:336.5px;font-size:19px;line-height:20px;color:#7a7a7a;font-family:'Liberation Serif',serif;font-style:italic;">I</span>
<svg style="left:797.5px;top:338px" width="24" height="17" viewBox="0 0 24 17"><path d="M.3 8L6 2.500000000000001v11z" fill="#8e8e8e"/><rect x="6.5" y=".8" width="12" height="14.5" fill="#f2df58" stroke="#c9b52a" stroke-width=".8"/><text x="6.3" y="14.8" font-family="Liberation Serif" font-size="23" fill="#5a2a7a">ε</text><path d="M16.3 11.8h7l-3.500000000000001 3.800000000000001z" fill="#4a4a4a"/></svg>
<span class="t" style="left:282px;top:371px;font-size:10.23px;line-height:16px;color:#000;letter-spacing:-0.636px;">Size</span>
<div class="inp" style="left:325px;top:369px;width:464px;height:19px"></div>
<div style="left:775px;top:370px;width:13px;height:17px;border-left:1px solid #c8c8c8;background:linear-gradient(#fbfbfb,#ebebeb);border-radius:0 2px 2px 0"></div>
<svg style="left:776.5px;top:370.5px" width="10" height="16"><path d="M1.500000000000001 6.5l3.500000000000001-4.200000000000001 3.500000000000001 4.200000000000001zM1.500000000000001 9.5l3.500000000000001 4.200000000000001 3.500000000000001-4.200000000000001z" fill="#444"/></svg>
<span class="t" style="left:330.5px;top:371px;font-size:11px;line-height:16px;color:#000;letter-spacing:-0.228px;">13.0000</span>
<div style="left:795px;top:365px;width:30px;height:26px;border:1px solid #0078d7;background:#f0f0f0"></div>
<svg style="left:797.5px;top:370px" width="24" height="17" viewBox="0 0 24 17"><path d="M.3 8L6 2.500000000000001v11z" fill="#8e8e8e"/><rect x="6.300000000000001" y=".8" width="11.600000000000001" height="14.600000000000001" fill="#fff" stroke="#7d7d7d" stroke-width="1"/><rect x="8.3" y="3" width="7.6" height="2" fill="#4d4d4d"/><rect x="8.3" y="7.5" width="7.6" height="1" fill="#808080"/><rect x="8.3" y="11" width="7.6" height="1.200000000000001" fill="#5a5a5a"/><path d="M16.3 11.8h7l-3.500000000000001 3.800000000000001z" fill="#4a4a4a"/></svg>
<div class="btn" style="left:325px;top:399px;width:464px;height:22px"></div>
<svg style="left:773px;top:407.6px" width="9" height="5.8"><path d="M1 1h7l-3.5 3.8z" fill="#4a4a4a"/></svg>
<span class="t" style="left:329.2px;top:402.5px;font-size:11px;line-height:16px;color:#000;letter-spacing:-0.296px;">Points</span>
<span class="t" style="left:282px;top:435px;font-size:10.79px;line-height:16px;color:#000;letter-spacing:-0.450px;">Color</span>
<div class="btn" style="left:325px;top:431px;width:453px;height:22px"></div>
<div style="left:330px;top:434.5px;width:443px;height:15px;background:#000;border-radius:2.5px"></div>
<div class="btn" style="left:778px;top:431px;width:11px;height:22px"></div>
<svg style="left:779px;top:439.5px" width="9" height="6"><path d="M1 1h7l-3.5 4z" fill="#4a4a4a"/></svg>
<span class="t" style="left:282px;top:467px;font-size:11px;line-height:16px;color:#000;letter-spacing:-0.283px;">Opacity</span>
<div style="left:326px;top:471px;width:350px;height:5px;background:#0078d7;border:1px solid #9aa7b3;border-radius:2px"></div>
<div style="left:672px;top:467.5px;width:12.5px;height:12.5px;background:linear-gradient(#fff,#eee);border:1px solid #a0a0a0;border-radius:3px"></div>
<div class="inp" style="left:689px;top:464.5px;width:100px;height:19.5px"></div>
<div style="left:775px;top:465.5px;width:13px;height:17.5px;border-left:1px solid #c8c8c8;background:linear-gradient(#fbfbfb,#ebebeb);border-radius:0 2px 2px 0"></div>
<svg style="left:776.5px;top:466.25px" width="10" height="16"><path d="M1.500000000000001 6.5l3.500000000000001-4.200000000000001 3.500000000000001 4.200000000000001zM1.500000000000001 9.5l3.500000000000001 4.200000000000001 3.500000000000001-4.200000000000001z" fill="#444"/></svg>
<span class="t" style="left:694.8px;top:467px;font-size:11px;line-height:16px;color:#000;letter-spacing:0.021px;">100.0 %</span>
<svg style="left:280px;top:492px" width="3" height="20"><g fill="#bdbdbd"><rect x="1" y="0" width="1" height="1"/><rect x="1" y="3" width="1" height="1"/><rect x="1" y="6" width="1" height="1"/><rect x="1" y="9" width="1" height="1"/><rect x="1" y="12" width="1" height="1"/><rect x="1" y="15" width="1" height="1"/></g></svg>
<svg style="left:159.5px;top:413px" width="3" height="14"><g fill="#bdbdbd"><rect x="1" y="0" width="1" height="1"/><rect x="1" y="3" width="1" height="1"/><rect x="1" y="6" width="1" height="1"/><rect x="1" y="9" width="1" height="1"/><rect x="1" y="12" width="1" height="1"/></g></svg>
<div class="inp" style="left:282px;top:505px;width:512px;height:21.5px"></div>
<div style="left:773px;top:506px;width:20px;height:19.5px;border-left:1px solid #c8c8c8;background:linear-gradient(#fbfbfb,#ebebeb);border-radius:0 2px 2px 0"></div>
<svg style="left:778.5px;top:513.35px" width="9" height="5.8"><path d="M1 1h7l-3.5 3.8z" fill="#4a4a4a"/></svg>
<svg style="left:292px;top:510px" width="13" height="13"><circle cx="5" cy="5" r="3.600000000000001" fill="none" stroke="#8a8a8a" stroke-width="1.100000000000001"/><path d="M7.700000000000001 7.700000000000001l3.800000000000001 3.800000000000001" stroke="#8a8a8a" stroke-width="1.400000000000001"/></svg>
<span class="t" style="left:311.2px;top:508.5px;font-size:11px;line-height:16px;color:#000;letter-spacing:-0.006px;">Favorites</span>
<svg style="left:752px;top:510.5px" width="14" height="11"><path d="M4.500000000000001 .5h9v10h-9L.3 5.5z" fill="#a2a2a2"/><path d="M6.5 3l4.500000000000001 5M11 3l-4.500000000000001 5" stroke="#fff" stroke-width="1.200000000000001"/></svg>
<div style="left:282px;top:532px;width:543px;height:193px;background:#fff;border:1px solid #a5a5a5"></div>
<div class="btn" style="left:282px;top:731px;width:23px;height:22px;background:#e2e2e2;border-color:#b9b9b9"></div>
<svg style="left:287px;top:735px" width="14" height="14"><g fill="#6b97cf"><rect x="1" y="1" width="2.800000000000001" height="2.800000000000001"/><rect x="1" y="5.3" width="2.800000000000001" height="2.800000000000001"/><rect x="1" y="9.6" width="2.800000000000001" height="2.800000000000001"/><rect x="5.3" y="1" width="2.800000000000001" height="2.800000000000001"/><rect x="5.3" y="5.3" width="2.800000000000001" height="2.800000000000001"/><rect x="5.3" y="9.6" width="2.800000000000001" height="2.800000000000001"/><rect x="9.6" y="1" width="2.800000000000001" height="2.800000000000001"/><rect x="9.6" y="5.3" width="2.800000000000001" height="2.800000000000001"/><rect x="9.6" y="9.6" width="2.800000000000001" height="2.800000000000001"/></g></svg>
<svg style="left:311px;top:735px" width="14" height="14"><rect x=".5" y=".5" width="12.5" height="12.5" fill="#eaf1fa" stroke="#7fa6d6" stroke-width="1"/><rect x="1" y="1" width="11.500000000000002" height="3" fill="#9dbde4"/><path d="M3 6.5h8.5M3 9h8.5M3 11.500000000000002h8.5" stroke="#7fa6d6" stroke-width="1"/><rect x="2.500000000000001" y="5" width="1.500000000000001" height="7" fill="#bcd1ec"/></svg>
<div class="btn" style="left:742px;top:732.5px;width:82.5px;height:20.5px"></div>
<span class="t" style="left:745.6px;top:735px;font-size:11px;line-height:16px;color:#000;letter-spacing:-0.110px;">Save Settings...</span>
<div class="btn" style="left:163px;top:760px;width:80px;height:21.5px"></div>
<span class="t" style="left:184.2px;top:763px;font-size:11px;line-height:16px;color:#000;letter-spacing:-0.167px;">Style</span>
<svg style="left:231px;top:768.25px" width="8" height="5.5"><path d="M1 1h6l-3 3.5z" fill="#4a4a4a"/></svg>
<div class="btn" style="left:493px;top:760px;width:79.5px;height:21.5px;border-color:#0078d7;background:linear-gradient(#f3f9ff,#e4f0fc)"></div>
<span class="t" style="left:525.4px;top:763px;font-size:10.23px;line-height:16px;color:#000;letter-spacing:-0.893px;">OK</span>
<div class="btn" style="left:579px;top:760px;width:79.5px;height:21.5px;"></div>
<span class="t" style="left:602.2px;top:763px;font-size:11px;line-height:16px;color:#000;letter-spacing:-0.430px;">Cancel</span>
<div class="btn" style="left:665px;top:760px;width:79.5px;height:21.5px;"></div>
<span class="t" style="left:690.7px;top:763px;font-size:11px;line-height:16px;color:#000;letter-spacing:-0.233px;">Apply</span>
<div class="btn" style="left:751px;top:760px;width:79.5px;height:21.5px;"></div>
<span class="t" style="left:779.5px;top:763px;font-size:10.72px;line-height:16px;color:#000;letter-spacing:-0.450px;">Help</span>
<div style="left:795px;top:391px;width:245px;height:236px;background:#fff;border:1px solid #a0a0a0;box-shadow:2px 2px 4px rgba(0,0,0,.45)"></div>
<span class="t" style="left:823.3px;top:395px;font-size:12px;line-height:16px;color:#7d7d7d;letter-spacing:-0.017px;font-style:italic;">Data defined override</span>
<span class="t" style="left:823.3px;top:417.7px;font-size:12px;line-height:16px;color:#000;letter-spacing:-0.149px;">Description...</span>
<div style="left:800px;top:437.5px;width:235px;height:1px;background:#c9c9c9"></div>
<div style="left:803px;top:444.3px;width:13px;height:13px;background:#fff;border:1px solid #8b8b8b"></div>
<span class="t" style="left:823.3px;top:442.8px;font-size:12px;line-height:16px;color:#000;letter-spacing:-0.181px;">Store Data in the Project</span>
<span class="t" style="left:823.3px;top:465.5px;font-size:12px;line-height:16px;color:#7d7d7d;letter-spacing:0.004px;font-style:italic;">Attribute Field</span>
<div style="left:796px;top:485px;width:243px;height:23px;background:#0078d7"></div>
<div style="left:803px;top:490.0px;width:13px;height:13px;background:#fff;border:1px solid #fff"></div>
<span class="t" style="left:823.3px;top:488.5px;font-size:12px;line-height:16px;color:#fff;letter-spacing:-0.023px;">Field type: int, double, string</span>
<svg style="left:1029px;top:491.5px" width="7" height="10"><path d="M1.500000000000001 1l4 4-4 4z" fill="#fff"/></svg>
<span class="t" style="left:823.3px;top:514px;font-size:11.57px;line-height:16px;color:#7d7d7d;letter-spacing:-0.450px;font-style:italic;">Expression</span>
<div style="left:803px;top:538.5px;width:13px;height:13px;background:#fff;border:1px solid #8b8b8b"></div>
<span class="t" style="left:823.3px;top:537px;font-size:12px;line-height:16px;color:#000;letter-spacing:-0.320px;">Variable</span>
<svg style="left:1029px;top:540px" width="7" height="10"><path d="M1.500000000000001 1l4 4-4 4z" fill="#444"/></svg>
<span class="t" style="left:823.3px;top:559.7px;font-size:12px;line-height:16px;color:#000;letter-spacing:-0.398px;">Edit...</span>
<span class="t" style="left:823.3px;top:582.7px;font-size:11.54px;line-height:16px;color:#000;letter-spacing:-0.450px;">Paste</span>
<div style="left:800px;top:602.5px;width:235px;height:1px;background:#c9c9c9"></div>
<span class="t" style="left:823.3px;top:608px;font-size:12px;line-height:16px;color:#000;letter-spacing:-0.448px;font-weight:bold;">Assistant...</span>
<div style="left:1039px;top:485px;width:175px;height:231px;background:#fff;border:1px solid #a0a0a0;box-shadow:2px 2px 4px rgba(0,0,0,.45)"></div>
<div style="left:1040px;top:692.5px;width:173px;height:22.5px;background:#0078d7"></div>
<span class="t" style="left:1067.5px;top:488.5px;font-size:12px;line-height:16px;color:#000;letter-spacing:0.007px;">full_id</span>
<span class="t" style="left:1111.2px;top:488.5px;font-size:12px;line-height:16px;color:#000;letter-spacing:0.008px;">(string)</span>
<span class="t" style="left:1067.5px;top:511.5px;font-size:12px;line-height:16px;color:#000;letter-spacing:-0.257px;">osm_id</span>
<span class="t" style="left:1117px;top:511.5px;font-size:12px;line-height:16px;color:#000;letter-spacing:0.079px;">(string)</span>
<span class="t" style="left:1067.5px;top:534.5px;font-size:12px;line-height:16px;color:#000;letter-spacing:-0.247px;">osm_type</span>
<span class="t" style="left:1130.2px;top:534.5px;font-size:12px;line-height:16px;color:#000;letter-spacing:0.051px;">(string)</span>
<span class="t" style="left:1067.5px;top:557.5px;font-size:11.67px;line-height:16px;color:#000;letter-spacing:-0.450px;">is_in</span>
<span class="t" style="left:1102px;top:557.5px;font-size:12px;line-height:16px;color:#000;letter-spacing:0.008px;">(string)</span>
<span class="t" style="left:1067.5px;top:580.5px;font-size:12px;line-height:16px;color:#000;letter-spacing:-0.210px;">name</span>
<span class="t" style="left:1109.2px;top:580.5px;font-size:12px;line-height:16px;color:#000;letter-spacing:0.008px;">(string)</span>
<span class="t" style="left:1067.5px;top:603.5px;font-size:12px;line-height:16px;color:#000;letter-spacing:-0.347px;">place</span>
<span class="t" style="left:1107.5px;top:603.5px;font-size:12px;line-height:16px;color:#000;letter-spacing:-0.035px;">(string)</span>
<span class="t" style="left:1067.5px;top:626.5px;font-size:11.78px;line-height:16px;color:#000;letter-spacing:-0.450px;">sagns_id</span>
<span class="t" style="left:1124.2px;top:626.5px;font-size:12px;line-height:16px;color:#000;letter-spacing:-0.006px;">(string)</span>
<span class="t" style="left:1067.5px;top:649.5px;font-size:12px;line-height:16px;color:#000;letter-spacing:-0.066px;">wikidata</span>
<span class="t" style="left:1123px;top:649.5px;font-size:12px;line-height:16px;color:#000;letter-spacing:0.008px;">(string)</span>
<span class="t" style="left:1067.5px;top:672.5px;font-size:12px;line-height:16px;color:#000;letter-spacing:-0.057px;">wikipedia</span>
<span class="t" style="left:1129px;top:672.5px;font-size:12px;line-height:16px;color:#000;letter-spacing:0.008px;">(string)</span>
<span class="t" style="left:1067.5px;top:695.5px;font-size:11.16px;line-height:16px;color:#fff;letter-spacing:-0.662px;">FONT_SIZE</span>
<span class="t" style="left:1136.5px;top:695.5px;font-size:12px;line-height:16px;color:#fff;letter-spacing:0.067px;">(double)</span>
</body></html>
